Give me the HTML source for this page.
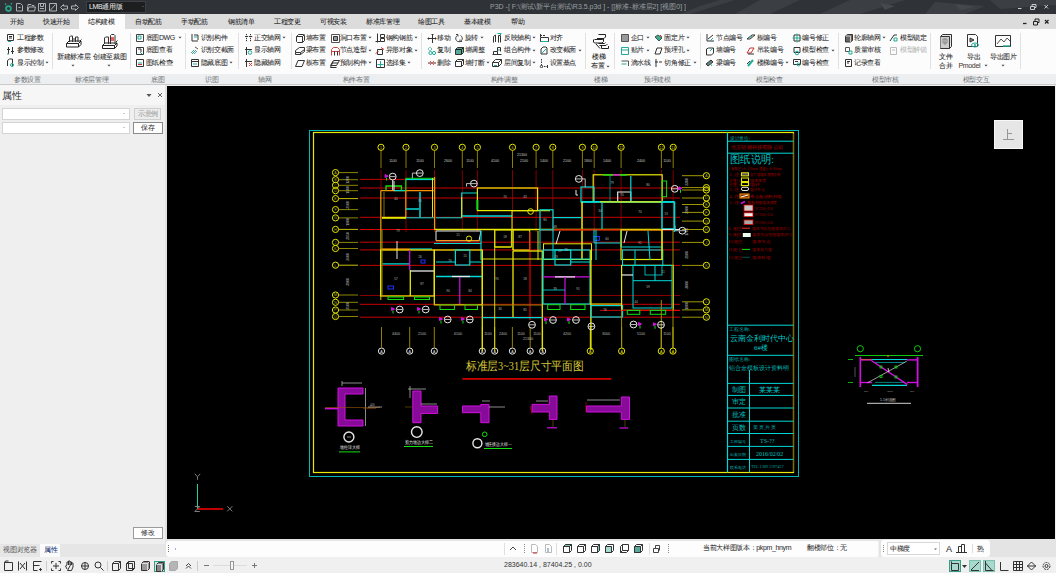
<!DOCTYPE html>
<html><head><meta charset="utf-8">
<style>
*{margin:0;padding:0;box-sizing:border-box}
html,body{width:1056px;height:573px;overflow:hidden;background:#f0f0f0;font-family:"Liberation Sans",sans-serif;position:relative}
.a{position:absolute}
#title{left:0;top:0;width:1056px;height:14px;background:#2f3337}
#tabs{left:0;top:14px;width:1056px;height:15px;background:#dcdcdc}
#rbg{left:0;top:29px;width:1056px;height:45px;background:#fcfcfc}
#glabels{left:0;top:74px;width:1056px;height:10px;background:#eceeef}
#gline{left:0;top:84px;width:1056px;height:1px;background:#c8cacb}
#panel{left:0;top:85px;width:165px;height:459px;background:#efefef}
#canvas{left:167px;top:86px;width:888px;height:453px;background:#000;overflow:hidden}
#cmdarea{left:165px;top:539px;width:891px;height:18px;background:#e4e4e4}
#ptabs{left:0;top:544px;width:165px;height:13px;background:#e6e6e6}
#bottom{left:0;top:557px;width:1056px;height:16px;background:#f0f0f0}
.t{position:absolute;white-space:nowrap;font-size:7px;line-height:8px;color:#222;letter-spacing:-0.35px;-webkit-text-stroke:0.05px currentColor}
</style></head><body>
<div id="title" class="a">
<svg class="a" style="left:0;top:0" width="1056" height="14">
<defs><pattern id="pp" width="60" height="14" patternUnits="userSpaceOnUse"></pattern></defs>
<g fill="#3b3f43">
<polygon points="760,0 800,0 770,14 735,14"/>
<polygon points="850,0 905,0 860,14 820,14"/>
<polygon points="935,2 985,6 965,14 925,14"/>
<polygon points="990,0 1056,0 1056,5 1000,9"/>
<polygon points="700,6 720,0 735,0 690,14 680,14"/>
</g>
<g fill="#45494d"><polygon points="880,3 895,6 885,10"/><polygon points="955,4 975,7 960,10"/></g>
<g fill="none" stroke="#aeb2b5" stroke-width="1">
<circle cx="8.5" cy="8.6" r="2.4" stroke="#29a58a" stroke-width="1.8"/><path d="M5 3.5l1.2 1.2 M12 3.2l-1.2 1.2" stroke="#29a58a" stroke-width="1.3"/>
<path d="M16.5 3.5h4l2 2v5.5h-6z M18.5 7.5h2"/>
<path d="M27.5 6.5v4.5h7l1-4h-6.5l-1.5 4 M28 6.5v-2h3l1 1h2v1"/>
<path d="M38.5 3.5h7v7.5h-7z M40.5 3.5v3h3v-3 M40 8.5h4"/>
<path d="M49.5 3.5h7v7.5h-7z M50.5 10l5-5.5"/>
<path d="M60.5 7.5l3-3v1.5h4v3h-4v1.5z"/>
<path d="M78.5 7.5l-3-3v1.5h-4v3h4v1.5z"/>
</g>
<rect x="86.5" y="1.5" width="59" height="11" fill="#1c1e20" stroke="#3c4043"/>
</svg>
<div class="t" style="left:89px;top:3px;color:#e6e6e6;font-size:7px;line-height:8px">LMB通用版</div>
<div class="t" style="left:142px;top:2px;color:#999;font-size:6px">-</div>
<div class="t" style="left:490px;top:3px;color:#9aa0a4;font-size:7px;line-height:8px;letter-spacing:0;-webkit-text-stroke:0">P3D -[ F:\测试\新平台测试\R3.5.p3d ] - [[标准-标准层2] [视图0] ]</div>
<svg class="a" style="left:1010px;top:0" width="46" height="14" fill="none" stroke="#c8cbcd" stroke-width="1">
<path d="M8 8.5h3.5"/>
<path d="M20.5 6.5h4v3h-4z M22 6.5v-2h4v3h-1.5"/>
<path d="M34.5 5l3.5 3.5M38 5l-3.5 3.5"/>
</svg>
</div>
<div id="tabs" class="a">
<div class="a" style="left:79px;top:0;width:46px;height:15px;background:#fcfcfc"></div>
<div class="t" style="left:10px;top:4px">开始</div>
<div class="t" style="left:43px;top:4px">快速开始</div>
<div class="t" style="left:88px;top:4px">结构建模</div>
<div class="t" style="left:135px;top:4px">自动配筋</div>
<div class="t" style="left:181px;top:4px">手动配筋</div>
<div class="t" style="left:228px;top:4px">钢筋清单</div>
<div class="t" style="left:274px;top:4px">工程变更</div>
<div class="t" style="left:320px;top:4px">可视安装</div>
<div class="t" style="left:366px;top:4px">标准库管理</div>
<div class="t" style="left:418px;top:4px">绘图工具</div>
<div class="t" style="left:464px;top:4px">基本建模</div>
<div class="t" style="left:511px;top:4px">帮助</div>
<svg class="a" style="left:1010px;top:0" width="46" height="15" fill="none" stroke="#222" stroke-width="1">
<path d="M13 9.5h3.5" stroke-width="1.3"/>
<path d="M23.5 7.5h4v3.5h-4z M25 7.5v-2.5h4v3.5h-1.5"/>
<path d="M35 6l3.5 3.5M38.5 6l-3.5 3.5" stroke-width="1.2"/>
</svg>
</div>
<div id="rbg" class="a"></div><div id="glabels" class="a"></div><div id="gline" class="a"></div>
<div id="ribbon" class="a" style="left:0;top:0;width:0;height:0;background:none"></div>
<svg class="a" style="left:6px;top:33px" width="10" height="10" fill="none" stroke-width="1"><path d="M1.5 1.5h6v6h-6z M3 3.5h3 M3 5h3" stroke="#333"/><path d="M2 8.5h3" stroke="#2a9"/></svg>
<div class="t" style="left:17px;top:33.5px;font-size:7px;color:#2a2a2a">工程参数</div>
<svg class="a" style="left:6px;top:46px" width="10" height="10" fill="none" stroke-width="1"><path d="M2.5 1v7 M6.5 1v7 M1 3.5h3 M5 5.5h3" stroke="#333"/><path d="M1 8h2" stroke="#2a9"/></svg>
<div class="t" style="left:17px;top:46.0px;font-size:7px;color:#2a2a2a">参数修改</div>
<svg class="a" style="left:6px;top:58px" width="10" height="10" fill="none" stroke-width="1"><path d="M1.5 8V2.5l2-1.5h3v7" stroke="#333"/><circle cx="6" cy="7" r="1.5" stroke="#2a9"/></svg>
<div class="t" style="left:17px;top:58.7px;font-size:7px;color:#2a2a2a">显示控制</div>
<svg class="a" style="left:45px;top:61.2px" width="4" height="3"><path d="M0.5 0.8h3l-1.5 1.7z" fill="#444"/></svg>
<div class="a" style="left:52px;top:33px;width:1px;height:36px;background:#dfe1e2"></div>
<div class="t" style="left:14px;top:75.8px;font-size:7px;color:#707376;-webkit-text-stroke:0">参数设置</div>
<svg class="a" style="left:0;top:0" width="140" height="60" fill="none" stroke="#222" stroke-width="1">
<path d="M66.5 43.5l2.5-2.5h12l-2.5 2.5z M66.5 43.5v3.5h12v-3.5 M78.5 47l2.5-2.5v-3.5" />
<path d="M69.5 42v-5l1-1h2v6 M75.5 42v-5h2.5v5 M73 39h2" stroke="#333"/>
<path d="M80 41l1.5-1.5" />
<path d="M102.5 45.5l2.5-2.5h12l-2.5 2.5z M102.5 45.5v3h12v-3 M114.5 48.5l2.5-2.5v-3" />
<path d="M104.5 44v-6l1-1h3v7 M110.5 44v-8.5l1-1h2.5l1 1v8.5" stroke="#333"/>
<rect x="111" y="37" width="3" height="4" fill="#f06060" stroke="none"/>
<path d="M116 42l1.5-1.5"/>
</svg>
<div class="t" style="left:57px;top:52.7px;font-size:7px;color:#1a1a1a">新建标准层</div>
<div class="t" style="left:93px;top:52.7px;font-size:7px;color:#1a1a1a">创建至裁图</div>
<svg class="a" style="left:71px;top:63.5px" width="4" height="3"><path d="M0.5 0.8h3l-1.5 1.7z" fill="#444"/></svg>
<svg class="a" style="left:107px;top:63.5px" width="4" height="3"><path d="M0.5 0.8h3l-1.5 1.7z" fill="#444"/></svg>
<div class="a" style="left:130px;top:33px;width:1px;height:36px;background:#dfe1e2"></div>
<div class="t" style="left:75px;top:75.8px;font-size:7px;color:#707376;-webkit-text-stroke:0">标准层管理</div>
<svg class="a" style="left:135px;top:33px" width="10" height="10" fill="none" stroke-width="1"><path d="M1.5 1.5h7v7h-7z" stroke="#444"/><path d="M3 3h3v3h-3z" stroke="#2a9"/></svg>
<div class="t" style="left:145.6px;top:33.5px;font-size:7px;color:#2a2a2a">底图DWG</div>
<svg class="a" style="left:178px;top:36.0px" width="4" height="3"><path d="M0.5 0.8h3l-1.5 1.7z" fill="#444"/></svg>
<svg class="a" style="left:135px;top:46px" width="10" height="10" fill="none" stroke-width="1"><path d="M1.5 1.5h7v7h-7z" stroke="#333"/><path d="M3 3h3v3" stroke="#333"/><path d="M5 6l2 2" stroke="#2a9"/></svg>
<div class="t" style="left:145.6px;top:46.0px;font-size:7px;color:#2a2a2a">底图查看</div>
<svg class="a" style="left:135px;top:58px" width="10" height="10" fill="none" stroke-width="1"><path d="M1.5 1.5h7v7h-7z" stroke="#333"/><path d="M3 5h4" stroke="#2a9"/><path d="M3 6.5h4" stroke="#c33"/></svg>
<div class="t" style="left:145.6px;top:58.7px;font-size:7px;color:#2a2a2a">图纸检查</div>
<svg class="a" style="left:170px;top:61.2px" width="4" height="3"><path d="M0.5 0.8h3l-1.5 1.7z" fill="#444"/></svg>
<div class="a" style="left:185px;top:33px;width:1px;height:36px;background:#dfe1e2"></div>
<div class="t" style="left:151px;top:75.8px;font-size:7px;color:#707376;-webkit-text-stroke:0">底图</div>
<svg class="a" style="left:190px;top:33px" width="10" height="10" fill="none" stroke-width="1"><path d="M2 1v7h6 M4 2h4v5" stroke="#333"/><path d="M4 4h3" stroke="#2a9"/></svg>
<div class="t" style="left:200.6px;top:33.5px;font-size:7px;color:#2a2a2a">识别构件</div>
<svg class="a" style="left:190px;top:46px" width="10" height="10" fill="none" stroke-width="1"><path d="M1 7l3-3 M2 8l4-4 M4 8l3-3" stroke="#4a9"/><path d="M5 1l3 2" stroke="#555"/></svg>
<div class="t" style="left:200.6px;top:46.0px;font-size:7px;color:#2a2a2a">识别交截面</div>
<svg class="a" style="left:190px;top:58px" width="10" height="10" fill="none" stroke-width="1"><path d="M1.5 1.5h7v7h-7z M1.5 3.5h7" stroke="#333"/><path d="M3 6h4" stroke="#2a9"/></svg>
<div class="t" style="left:200.6px;top:58.7px;font-size:7px;color:#2a2a2a">隐藏底图</div>
<svg class="a" style="left:229px;top:61.2px" width="4" height="3"><path d="M0.5 0.8h3l-1.5 1.7z" fill="#444"/></svg>
<div class="a" style="left:238px;top:33px;width:1px;height:36px;background:#dfe1e2"></div>
<div class="t" style="left:205px;top:75.8px;font-size:7px;color:#707376;-webkit-text-stroke:0">识图</div>
<svg class="a" style="left:244px;top:33px" width="10" height="10" fill="none" stroke-width="1"><path d="M2.5 1v8 M6.5 1v8 M1 3.5h8" stroke="#333" stroke-dasharray="1.2 0.8"/></svg>
<div class="t" style="left:254px;top:33.5px;font-size:7px;color:#2a2a2a">正交轴网</div>
<svg class="a" style="left:282px;top:36.0px" width="4" height="3"><path d="M0.5 0.8h3l-1.5 1.7z" fill="#444"/></svg>
<svg class="a" style="left:244px;top:46px" width="10" height="10" fill="none" stroke-width="1"><path d="M2.5 1v8 M1 3.5h7" stroke="#333"/><circle cx="6" cy="6.5" r="1.8" stroke="#2a9"/></svg>
<div class="t" style="left:254px;top:46.0px;font-size:7px;color:#2a2a2a">显示轴网</div>
<svg class="a" style="left:244px;top:58px" width="10" height="10" fill="none" stroke-width="1"><path d="M2.5 1v8 M1 3.5h7" stroke="#333"/><path d="M5 5l3 3M8 5l-3 3" stroke="#e33"/></svg>
<div class="t" style="left:254px;top:58.7px;font-size:7px;color:#2a2a2a">隐藏轴网</div>
<div class="a" style="left:291px;top:33px;width:1px;height:36px;background:#dfe1e2"></div>
<div class="t" style="left:258px;top:75.8px;font-size:7px;color:#707376;-webkit-text-stroke:0">轴网</div>
<svg class="a" style="left:295px;top:33px" width="10" height="10" fill="none" stroke-width="1"><path d="M1.5 3.5l2-2h5l1 1v5l-2 2h-5l-1-1z M1.5 3.5h6v6 M7.5 3.5l2-2" stroke="#333"/></svg>
<div class="t" style="left:305.6px;top:33.5px;font-size:7px;color:#2a2a2a">墙布置</div>
<svg class="a" style="left:295px;top:46px" width="10" height="10" fill="none" stroke-width="1"><path d="M0.5 4.5l4-3h5v2l-4 3h-5z M0.5 6.5v2h5v-2 M5.5 8.5l4-3v-2" stroke="#333"/></svg>
<div class="t" style="left:305.6px;top:46.0px;font-size:7px;color:#2a2a2a">梁布置</div>
<svg class="a" style="left:295px;top:58px" width="10" height="10" fill="none" stroke-width="1"><path d="M0.5 8.5l2.5-6h6.5l-2.5 6z" stroke="#333"/></svg>
<div class="t" style="left:305.6px;top:58.7px;font-size:7px;color:#2a2a2a">板布置</div>
<svg class="a" style="left:330px;top:33px" width="10" height="10" fill="none" stroke-width="1"><path d="M1.5 1.5h8v8h-8z" stroke="#555"/><path d="M3.5 3.5h4v4h-4z" stroke="#333" fill="#999"/></svg>
<div class="t" style="left:339.8px;top:33.5px;font-size:7px;color:#2a2a2a">洞口布置</div>
<svg class="a" style="left:368px;top:36.0px" width="4" height="3"><path d="M0.5 0.8h3l-1.5 1.7z" fill="#444"/></svg>
<svg class="a" style="left:330px;top:46px" width="10" height="10" fill="none" stroke-width="1"><path d="M1.5 9.5v-6l2-2h4l2 2v6 M1.5 5.5h8" stroke="#c44"/><path d="M4.5 9.5v-4 M7.5 9.5v-4" stroke="#333"/></svg>
<div class="t" style="left:339.8px;top:46.0px;font-size:7px;color:#2a2a2a">节点造型</div>
<svg class="a" style="left:368px;top:48.5px" width="4" height="3"><path d="M0.5 0.8h3l-1.5 1.7z" fill="#444"/></svg>
<svg class="a" style="left:330px;top:58px" width="10" height="10" fill="none" stroke-width="1"><path d="M0.5 7.5l3-5h6l-3 5z M2 5h6 M3 3.5l-2.5 6h6" stroke="#333"/></svg>
<div class="t" style="left:339.8px;top:58.7px;font-size:7px;color:#2a2a2a">预制构件</div>
<svg class="a" style="left:368px;top:61.2px" width="4" height="3"><path d="M0.5 0.8h3l-1.5 1.7z" fill="#444"/></svg>
<svg class="a" style="left:375px;top:33px" width="10" height="10" fill="none" stroke-width="1"><path d="M2.5 0.5v9 M0.5 8.5h5 M5.5 1.5h4v3h-4z M5.5 5.5h4v3h-4z" stroke="#333"/></svg>
<div class="t" style="left:385.7px;top:33.5px;font-size:7px;color:#2a2a2a">钢构钢筋</div>
<svg class="a" style="left:414px;top:36.0px" width="4" height="3"><path d="M0.5 0.8h3l-1.5 1.7z" fill="#444"/></svg>
<svg class="a" style="left:375px;top:46px" width="10" height="10" fill="none" stroke-width="1"><path d="M2.5 3.5h5v5h-5z" stroke="#333"/><path d="M0.5 7.5l3-2 M6 1.5l3 2" stroke="#c33"/></svg>
<div class="t" style="left:385.7px;top:46.0px;font-size:7px;color:#2a2a2a">异形对象</div>
<svg class="a" style="left:414px;top:48.5px" width="4" height="3"><path d="M0.5 0.8h3l-1.5 1.7z" fill="#444"/></svg>
<svg class="a" style="left:375px;top:58px" width="10" height="10" fill="none" stroke-width="1"><path d="M1.5 1.5h8v8h-8z" stroke="#333"/><path d="M5.5 3v6 M2.5 6.5h6" stroke="#2a9"/></svg>
<div class="t" style="left:385.7px;top:58.7px;font-size:7px;color:#2a2a2a">选择集</div>
<svg class="a" style="left:407px;top:61.2px" width="4" height="3"><path d="M0.5 0.8h3l-1.5 1.7z" fill="#444"/></svg>
<div class="a" style="left:421px;top:33px;width:1px;height:36px;background:#dfe1e2"></div>
<div class="t" style="left:342.6px;top:75.8px;font-size:7px;color:#707376;-webkit-text-stroke:0">构件布置</div>
<svg class="a" style="left:427px;top:33px" width="10" height="10" fill="none" stroke-width="1"><path d="M0.5 5.5h9 M5.5 1v9 M1.5 4.5v2 M8.5 4.5v2 M4.5 1.5h2" stroke="#333"/></svg>
<div class="t" style="left:437px;top:33.5px;font-size:7px;color:#2a2a2a">移动</div>
<svg class="a" style="left:427px;top:46px" width="10" height="10" fill="none" stroke-width="1"><circle cx="3" cy="3" r="1.6" stroke="#2a9" stroke-dasharray="1 .6"/><circle cx="3.5" cy="7" r="1.6" stroke="#2a9"/><circle cx="7" cy="7" r="1.6" stroke="#2a9"/></svg>
<div class="t" style="left:437px;top:46.0px;font-size:7px;color:#2a2a2a">复制</div>
<svg class="a" style="left:427px;top:58px" width="10" height="10" fill="none" stroke-width="1"><path d="M1 5h8" stroke="#333"/><path d="M3 3l4 4M7 3l-4 4" stroke="#e55"/></svg>
<div class="t" style="left:437px;top:58.7px;font-size:7px;color:#2a2a2a">删除</div>
<svg class="a" style="left:454px;top:33px" width="10" height="10" fill="none" stroke-width="1"><path d="M3.5 2.5a3.3 3.3 0 1 0 3 0" stroke="#444"/><path d="M2 1.5h2v2 M8 8.5h-2v-2" stroke="#444"/></svg>
<div class="t" style="left:464.8px;top:33.5px;font-size:7px;color:#2a2a2a">旋转</div>
<svg class="a" style="left:480px;top:36.0px" width="4" height="3"><path d="M0.5 0.8h3l-1.5 1.7z" fill="#444"/></svg>
<svg class="a" style="left:454px;top:46px" width="10" height="10" fill="none" stroke-width="1"><path d="M1.5 3.5l2-2h6v5l-2 2h-6z" stroke="#333" fill="#5aa898"/><path d="M1.5 3.5h6v5 M7.5 3.5l2-2" stroke="#222"/></svg>
<div class="t" style="left:464.8px;top:46.0px;font-size:7px;color:#2a2a2a">墙调整</div>
<svg class="a" style="left:454px;top:58px" width="10" height="10" fill="none" stroke-width="1"><path d="M1.5 3.5l2-2h6v5l-2 2h-6z M1.5 3.5h6v5 M7.5 3.5l2-2" stroke="#333"/></svg>
<div class="t" style="left:464.8px;top:58.7px;font-size:7px;color:#2a2a2a">墙打断</div>
<svg class="a" style="left:486px;top:61.2px" width="4" height="3"><path d="M0.5 0.8h3l-1.5 1.7z" fill="#444"/></svg>
<svg class="a" style="left:492px;top:33px" width="10" height="10" fill="none" stroke-width="1"><path d="M1.5 9.5v-6l2-1.5v7 M6.5 9.5v-7h2v7" stroke="#333"/><path d="M5.5 0.5h4 M8.5 0.5v2" stroke="#2a9"/></svg>
<div class="t" style="left:503.9px;top:33.5px;font-size:7px;color:#2a2a2a">反映轴构</div>
<svg class="a" style="left:532px;top:36.0px" width="4" height="3"><path d="M0.5 0.8h3l-1.5 1.7z" fill="#444"/></svg>
<svg class="a" style="left:492px;top:46px" width="10" height="10" fill="none" stroke-width="1"><path d="M0.5 8.5h9 M1.5 8.5v-3h4v3" stroke="#333"/><path d="M5.5 5.5v-4h3v4" stroke="#333"/><path d="M6 4h2" stroke="#2a9"/></svg>
<div class="t" style="left:503.9px;top:46.0px;font-size:7px;color:#2a2a2a">组合构件</div>
<svg class="a" style="left:532px;top:48.5px" width="4" height="3"><path d="M0.5 0.8h3l-1.5 1.7z" fill="#444"/></svg>
<svg class="a" style="left:492px;top:58px" width="10" height="10" fill="none" stroke-width="1"><path d="M0.5 4.5l3-3h6v4l-3 3h-6z M0.5 4.5h6v4 M6.5 4.5l3-3" stroke="#333"/><path d="M2 7.5h3" stroke="#2a9"/></svg>
<div class="t" style="left:503.9px;top:58.7px;font-size:7px;color:#2a2a2a">层间复制</div>
<svg class="a" style="left:532px;top:61.2px" width="4" height="3"><path d="M0.5 0.8h3l-1.5 1.7z" fill="#444"/></svg>
<svg class="a" style="left:539px;top:33px" width="10" height="10" fill="none" stroke-width="1"><path d="M1.5 4.5h8v4h-8z" stroke="#333"/><path d="M1 2.5h2 M4 2.5h2 M1.5 1v3" stroke="#333"/><path d="M2 8.5h7" stroke="#2a9"/></svg>
<div class="t" style="left:549.5px;top:33.5px;font-size:7px;color:#2a2a2a">对齐</div>
<svg class="a" style="left:539px;top:46px" width="10" height="10" fill="none" stroke-width="1"><path d="M2 8V3l2-2h3l1 1v6z" stroke="#333"/><path d="M3 7l4-4" stroke="#2a9"/></svg>
<div class="t" style="left:549.5px;top:46.0px;font-size:7px;color:#2a2a2a">改变截面</div>
<svg class="a" style="left:578px;top:48.5px" width="4" height="3"><path d="M0.5 0.8h3l-1.5 1.7z" fill="#444"/></svg>
<svg class="a" style="left:539px;top:58px" width="10" height="10" fill="none" stroke-width="1"><path d="M2.5 1v7.5h6" stroke="#333" stroke-dasharray="1.5 1"/><circle cx="2.5" cy="8.5" r="1.2" fill="#fff" stroke="#333"/><path d="M8.5 7v3" stroke="#333"/></svg>
<div class="t" style="left:549.5px;top:58.7px;font-size:7px;color:#2a2a2a">设置基点</div>
<div class="a" style="left:585px;top:33px;width:1px;height:36px;background:#dfe1e2"></div>
<div class="t" style="left:490.8px;top:75.8px;font-size:7px;color:#707376;-webkit-text-stroke:0">构件调整</div>
<svg class="a" style="left:0;top:0" width="620" height="60" fill="none" stroke="#222" stroke-width="1">
<path d="M598.5 34.5h7v2.5l-1.5 1.5h-7 M596.5 37.5v0 M594.5 39.5h8l1.5-1.5 M593.5 39.5v2.5l1 1h7.5l1.5-1.5v-2.5 M598.5 43.5h6l1-1 M599.5 45.5h6.5l1.5-1.5 M601.5 46v2.5h7v-2.5 M596 44l4 4.5"/>
</svg>
<div class="t" style="left:592px;top:53.3px;font-size:7px;color:#1a1a1a">楼梯</div>
<div class="t" style="left:591px;top:62.3px;font-size:7px;color:#1a1a1a">布置</div>
<svg class="a" style="left:606px;top:64.8px" width="4" height="3"><path d="M0.5 0.8h3l-1.5 1.7z" fill="#444"/></svg>
<div class="a" style="left:614px;top:33px;width:1px;height:36px;background:#dfe1e2"></div>
<div class="t" style="left:594px;top:75.8px;font-size:7px;color:#707376;-webkit-text-stroke:0">楼梯</div>
<svg class="a" style="left:620px;top:33px" width="10" height="10" fill="none" stroke-width="1"><path d="M1.5 1.5h7v7h-7z" stroke="#555" fill="#999"/></svg>
<div class="t" style="left:630.5px;top:33.5px;font-size:7px;color:#2a2a2a">企口</div>
<svg class="a" style="left:645.5px;top:36.0px" width="4" height="3"><path d="M0.5 0.8h3l-1.5 1.7z" fill="#444"/></svg>
<svg class="a" style="left:620px;top:46px" width="10" height="10" fill="none" stroke-width="1"><path d="M1.5 1.5h7v7h-7z M1.5 4h7" stroke="#2a9"/></svg>
<div class="t" style="left:630.5px;top:46.0px;font-size:7px;color:#2a2a2a">贴片</div>
<svg class="a" style="left:645.5px;top:48.5px" width="4" height="3"><path d="M0.5 0.8h3l-1.5 1.7z" fill="#444"/></svg>
<svg class="a" style="left:620px;top:58px" width="10" height="10" fill="none" stroke-width="1"><path d="M1.5 3h7v5" stroke="#555"/><path d="M1.5 6h5" stroke="#2a9"/></svg>
<div class="t" style="left:630.5px;top:58.7px;font-size:7px;color:#2a2a2a">滴水线</div>
<svg class="a" style="left:654px;top:33px" width="10" height="10" fill="none" stroke-width="1"><path d="M1 4l3-2 4 3-3 3z" stroke="#355" fill="#4a8"/><path d="M6 2l2 2" stroke="#c33"/></svg>
<div class="t" style="left:664.4px;top:33.5px;font-size:7px;color:#2a2a2a">固定片</div>
<svg class="a" style="left:686px;top:36.0px" width="4" height="3"><path d="M0.5 0.8h3l-1.5 1.7z" fill="#444"/></svg>
<svg class="a" style="left:654px;top:46px" width="10" height="10" fill="none" stroke-width="1"><path d="M1 8l2-6h5l-2 6z" stroke="#333"/></svg>
<div class="t" style="left:664.4px;top:46.0px;font-size:7px;color:#2a2a2a">预埋孔</div>
<svg class="a" style="left:686px;top:48.5px" width="4" height="3"><path d="M0.5 0.8h3l-1.5 1.7z" fill="#444"/></svg>
<svg class="a" style="left:654px;top:58px" width="10" height="10" fill="none" stroke-width="1"><path d="M2 1v8 M1 4h3 M5 4h3" stroke="#333"/></svg>
<div class="t" style="left:664.4px;top:58.7px;font-size:7px;color:#2a2a2a">切角修正</div>
<svg class="a" style="left:693px;top:61.2px" width="4" height="3"><path d="M0.5 0.8h3l-1.5 1.7z" fill="#444"/></svg>
<div class="a" style="left:700px;top:33px;width:1px;height:36px;background:#dfe1e2"></div>
<div class="t" style="left:644px;top:75.8px;font-size:7px;color:#707376;-webkit-text-stroke:0">预埋建模</div>
<svg class="a" style="left:705px;top:33px" width="10" height="10" fill="none" stroke-width="1"><path d="M2 1v7h7 M3 6l5-4" stroke="#333"/><path d="M5 8l3-3" stroke="#2a9"/></svg>
<div class="t" style="left:716px;top:33.5px;font-size:7px;color:#2a2a2a">节点编号</div>
<svg class="a" style="left:705px;top:46px" width="10" height="10" fill="none" stroke-width="1"><path d="M1.5 3l2-1h5v5l-2 2h-5z" stroke="#333"/><path d="M5 5l3-3" stroke="#2a9"/></svg>
<div class="t" style="left:716px;top:46.0px;font-size:7px;color:#2a2a2a">墙编号</div>
<svg class="a" style="left:705px;top:58px" width="10" height="10" fill="none" stroke-width="1"><path d="M1 6l5-4 2 2-5 4z" stroke="#333" fill="#777"/><path d="M4 4l3 4" stroke="#2a9"/></svg>
<div class="t" style="left:716px;top:58.7px;font-size:7px;color:#2a2a2a">梁编号</div>
<svg class="a" style="left:746px;top:33px" width="10" height="10" fill="none" stroke-width="1"><path d="M1 6l5-4h3l-5 4z" stroke="#333"/><path d="M3 5l3-2" stroke="#2a9"/></svg>
<div class="t" style="left:756.7px;top:33.5px;font-size:7px;color:#2a2a2a">板编号</div>
<svg class="a" style="left:746px;top:46px" width="10" height="10" fill="none" stroke-width="1"><path d="M1 7l3-5h4l-3 5z" stroke="#c33"/><path d="M2 8h6" stroke="#333"/></svg>
<div class="t" style="left:756.7px;top:46.0px;font-size:7px;color:#2a2a2a">吊装编号</div>
<svg class="a" style="left:746px;top:58px" width="10" height="10" fill="none" stroke-width="1"><path d="M2 8l5-6" stroke="#2a9" stroke-width="2"/><path d="M1 6l3-3" stroke="#333"/></svg>
<div class="t" style="left:756.7px;top:58.7px;font-size:7px;color:#2a2a2a">楼梯编号</div>
<svg class="a" style="left:785px;top:61.2px" width="4" height="3"><path d="M0.5 0.8h3l-1.5 1.7z" fill="#444"/></svg>
<svg class="a" style="left:792px;top:33px" width="10" height="10" fill="none" stroke-width="1"><path d="M2 2h6v6h-6z" stroke="#333"/><path d="M5 0.5v9 M0.5 5h9" stroke="#2a9"/></svg>
<div class="t" style="left:802.3px;top:33.5px;font-size:7px;color:#2a2a2a">编号修正</div>
<svg class="a" style="left:792px;top:46px" width="10" height="10" fill="none" stroke-width="1"><path d="M2 1.5h6v5h-6z" stroke="#333"/><circle cx="5" cy="7" r="1.8" stroke="#2a9"/></svg>
<div class="t" style="left:802.3px;top:46.0px;font-size:7px;color:#2a2a2a">模型检查</div>
<svg class="a" style="left:831px;top:48.5px" width="4" height="3"><path d="M0.5 0.8h3l-1.5 1.7z" fill="#444"/></svg>
<svg class="a" style="left:792px;top:58px" width="10" height="10" fill="none" stroke-width="1"><path d="M1.5 1.5h7v5h-7z M3 3.5h3" stroke="#333"/><circle cx="6.5" cy="6.5" r="1.5" stroke="#2a9"/></svg>
<div class="t" style="left:802.3px;top:58.7px;font-size:7px;color:#2a2a2a">编号检查</div>
<div class="a" style="left:838px;top:33px;width:1px;height:36px;background:#dfe1e2"></div>
<div class="t" style="left:756px;top:75.8px;font-size:7px;color:#707376;-webkit-text-stroke:0">模型检查</div>
<svg class="a" style="left:844px;top:33px" width="10" height="10" fill="none" stroke-width="1"><path d="M1.5 3l2-1.5h5v6l-2 1.5h-5z" stroke="#333" fill="#666"/><path d="M1.5 3h5v6" stroke="#ccc"/></svg>
<div class="t" style="left:854px;top:33.5px;font-size:7px;color:#2a2a2a">轮廓轴网</div>
<svg class="a" style="left:882.4px;top:36.0px" width="4" height="3"><path d="M0.5 0.8h3l-1.5 1.7z" fill="#444"/></svg>
<svg class="a" style="left:844px;top:46px" width="10" height="10" fill="none" stroke-width="1"><path d="M1.5 1.5h4v4h-4z" stroke="#555"/><path d="M5 5h3v3h-3z" stroke="#2a9"/></svg>
<div class="t" style="left:854px;top:46.0px;font-size:7px;color:#2a2a2a">质量审核</div>
<svg class="a" style="left:844px;top:58px" width="10" height="10" fill="none" stroke-width="1"><path d="M1.5 1.5h6v7h-6z M3 3.5h3 M3 5h2" stroke="#333"/></svg>
<div class="t" style="left:854px;top:58.7px;font-size:7px;color:#2a2a2a">记录查看</div>
<svg class="a" style="left:889px;top:33px" width="10" height="10" fill="none" stroke-width="1"><path d="M1 8l4-6h3" stroke="#333"/><path d="M5 5h3v3h-3z" stroke="#2a9"/></svg>
<div class="t" style="left:900px;top:33.5px;font-size:7px;color:#2a2a2a">模型锁定</div>
<svg class="a" style="left:889px;top:46px" width="10" height="10" fill="none" stroke-width="1"><path d="M1.5 1.5h6v7h-6z M3 4h3" stroke="#bbb"/></svg>
<div class="t" style="left:900px;top:46.0px;font-size:7px;color:#b8b8b8">模型解锁</div>
<div class="a" style="left:930px;top:33px;width:1px;height:36px;background:#dfe1e2"></div>
<div class="t" style="left:872px;top:75.8px;font-size:7px;color:#707376;-webkit-text-stroke:0">模型审核</div>
<svg class="a" style="left:938px;top:33px" width="17" height="18" fill="none" stroke="#333" stroke-width="1">
<path d="M2.5 3.5l2-2h9v12l-2 2h-9z" fill="#e8e8e8"/><path d="M2.5 15.5h9v-12h-9" fill="#ccc"/><path d="M5 6h4v4h-4z M7 5v7" stroke="#888"/></svg>
<div class="t" style="left:939px;top:53.3px;font-size:7px;color:#1a1a1a">文件</div>
<div class="t" style="left:939px;top:62.3px;font-size:7px;color:#1a1a1a">合并</div>
<svg class="a" style="left:964px;top:33px" width="17" height="18" fill="none" stroke="#333" stroke-width="1">
<path d="M3.5 1.5h8l2 2v10h-10z"/><path d="M6 5l4 2-4 2z" fill="#888"/><ellipse cx="11" cy="12" rx="3.5" ry="2" stroke="#2a9"/><circle cx="11" cy="12" r="1" fill="#2a9" stroke="none"/></svg>
<div class="t" style="left:967px;top:53.3px;font-size:7px;color:#1a1a1a">导出</div>
<div class="t" style="left:958.5px;top:62.3px;font-size:7px;color:#4a3a3a">Pmodel</div>
<svg class="a" style="left:984px;top:63.5px" width="4" height="3"><path d="M0.5 0.8h3l-1.5 1.7z" fill="#444"/></svg>
<svg class="a" style="left:994px;top:34px" width="18" height="15" fill="none" stroke="#333" stroke-width="1">
<path d="M1.5 1.5h15v11h-15z"/><path d="M3 10l4-5 3 3 3-4 3 3" stroke="#555"/><path d="M9 12h7" stroke="#2a9" stroke-width="1.4"/></svg>
<div class="t" style="left:990px;top:53.3px;font-size:7px;color:#1a1a1a">导出图片</div>
<svg class="a" style="left:1001px;top:63.5px" width="4" height="3"><path d="M0.5 0.8h3l-1.5 1.7z" fill="#444"/></svg>
<div class="a" style="left:1020px;top:33px;width:1px;height:36px;background:#dfe1e2"></div>
<div class="t" style="left:962.6px;top:75.8px;font-size:7px;color:#707376;-webkit-text-stroke:0">模型交互</div>
<div id="panel" class="a">
<div class="a" style="left:0;top:0;width:165px;height:20px;background:#f6f6f6"></div>
<div class="t" style="left:2px;top:5px;font-size:10px;line-height:11px;color:#333;letter-spacing:-0.3px;-webkit-text-stroke:0">属性</div>
<svg class="a" style="left:144px;top:6px" width="20" height="9"><path d="M2.5 3h5l-2.5 3z" fill="#555"/><path d="M14 2l4 4M18 2l-4 4" stroke="#666" stroke-width="1"/></svg>
<div class="a" style="left:2px;top:23px;width:128px;height:12px;background:#fff;border:1px solid #d4d4d4"></div>
<div class="t" style="left:123px;top:24px;color:#555;font-size:6px">-</div>
<div class="a" style="left:134px;top:23px;width:27px;height:12px;background:#ececec;border:1px solid #cfcfcf"></div>
<div class="t" style="left:138px;top:25px;color:#9a9a9a">示意例</div>
<div class="a" style="left:2px;top:37px;width:128px;height:12px;background:#fff;border:1px solid #d4d4d4"></div>
<div class="t" style="left:123px;top:38px;color:#555;font-size:6px">-</div>
<div class="a" style="left:133px;top:37px;width:30px;height:12px;background:#fff;border:1px solid #8a8a8a"></div>
<div class="t" style="left:141px;top:39px;color:#222;-webkit-text-stroke:0">保存</div>
<div class="a" style="left:133px;top:442px;width:30px;height:12px;background:#fff;border:1px solid #9a9a9a"></div>
<div class="t" style="left:141px;top:444px;color:#333;-webkit-text-stroke:0">修改</div>
<div class="a" style="left:165px;top:0;width:2px;height:459px;background:#e2e2e2"></div>
</div>

<div id="canvas" class="a"><svg class="a" style="left:-167px;top:-86px" width="1056" height="573" font-family="Liberation Serif"><rect x="309.5" y="130.5" width="489.0" height="346.0" stroke="#00b8b8" stroke-width="1" fill="none"/>
<rect x="313.5" y="132.5" width="480.0" height="340.0" stroke="#e8e800" stroke-width="1.2" fill="none"/>
<line x1="793.5" y1="133.5" x2="793.5" y2="471.8" stroke="#7a6a00" stroke-width="1.2"/>
<line x1="727.5" y1="132.5" x2="727.5" y2="472.5" stroke="#00d8d8" stroke-width="1.2"/>
<line x1="727.5" y1="141.2" x2="793.5" y2="141.2" stroke="#00d8d8" stroke-width="1"/>
<line x1="727.5" y1="153.2" x2="793.5" y2="153.2" stroke="#00d8d8" stroke-width="1"/>
<line x1="727.5" y1="325.2" x2="793.5" y2="325.2" stroke="#00d8d8" stroke-width="1"/>
<line x1="727.5" y1="355.3" x2="793.5" y2="355.3" stroke="#00d8d8" stroke-width="1"/>
<line x1="727.5" y1="383.4" x2="793.5" y2="383.4" stroke="#00d8d8" stroke-width="1"/>
<line x1="727.5" y1="395.4" x2="793.5" y2="395.4" stroke="#00d8d8" stroke-width="1"/>
<line x1="727.5" y1="408" x2="793.5" y2="408" stroke="#00d8d8" stroke-width="1"/>
<line x1="727.5" y1="421.2" x2="793.5" y2="421.2" stroke="#00d8d8" stroke-width="1"/>
<line x1="727.5" y1="433.5" x2="793.5" y2="433.5" stroke="#00d8d8" stroke-width="1"/>
<line x1="727.5" y1="446.4" x2="793.5" y2="446.4" stroke="#00d8d8" stroke-width="1"/>
<line x1="727.5" y1="459.4" x2="793.5" y2="459.4" stroke="#00d8d8" stroke-width="1"/>
<line x1="749.5" y1="370" x2="749.5" y2="472.5" stroke="#00d8d8" stroke-width="1"/>
<text x="730" y="139.5" fill="#00a8a8" font-size="5" font-family="Liberation Serif" text-anchor="start" textLength="20" lengthAdjust="spacingAndGlyphs">设计单位:</text>
<text x="731" y="149" fill="#b00000" font-size="5" font-family="Liberation Serif" text-anchor="start" textLength="52" lengthAdjust="spacingAndGlyphs">北京铝模科技有限公司</text>
<text x="730" y="162.5" fill="#00c0c0" font-size="10.5" font-family="Liberation Serif" text-anchor="start" textLength="44" lengthAdjust="spacingAndGlyphs">图纸说明:</text>
<text x="728" y="169.5" fill="#a00000" font-size="4.2" font-family="Liberation Serif" text-anchor="start" textLength="54" lengthAdjust="spacingAndGlyphs">1.板厚(主):h=120mm  混凝土:h=80mm</text>
<text x="729" y="176.3" fill="#a00000" font-size="4.2" font-family="Liberation Serif" text-anchor="start" textLength="12" lengthAdjust="spacingAndGlyphs">2.   注:</text>
<text x="750" y="176.3" fill="#a00000" font-size="4.2" font-family="Liberation Serif" text-anchor="start" textLength="30" lengthAdjust="spacingAndGlyphs">剪力墙墙体厚度结构</text>
<text x="729" y="181.5" fill="#a00000" font-size="4.2" font-family="Liberation Serif" text-anchor="start" textLength="12" lengthAdjust="spacingAndGlyphs">   注:</text>
<text x="750" y="181.5" fill="#a00000" font-size="4.2" font-family="Liberation Serif" text-anchor="start" textLength="16" lengthAdjust="spacingAndGlyphs">墙体厚度</text>
<text x="729" y="186" fill="#a00000" font-size="4.2" font-family="Liberation Serif" text-anchor="start" textLength="12" lengthAdjust="spacingAndGlyphs">   注:</text>
<text x="750" y="186" fill="#a00000" font-size="4.2" font-family="Liberation Serif" text-anchor="start" textLength="10" lengthAdjust="spacingAndGlyphs">墙柱</text>
<text x="729" y="191" fill="#a00000" font-size="4.2" font-family="Liberation Serif" text-anchor="start" textLength="12" lengthAdjust="spacingAndGlyphs">3.   注:</text>
<text x="750" y="191" fill="#a00000" font-size="4.2" font-family="Liberation Serif" text-anchor="start" textLength="14" lengthAdjust="spacingAndGlyphs">墙柱节点</text>
<text x="729" y="197.5" fill="#a00000" font-size="4.2" font-family="Liberation Serif" text-anchor="start" textLength="12" lengthAdjust="spacingAndGlyphs">4.   注:</text>
<text x="750" y="197.5" fill="#a00000" font-size="4.2" font-family="Liberation Serif" text-anchor="start" textLength="32" lengthAdjust="spacingAndGlyphs">叠合板结构外墙</text>
<text x="729" y="203.5" fill="#a00000" font-size="4.2" font-family="Liberation Serif" text-anchor="start" textLength="12" lengthAdjust="spacingAndGlyphs">5.   注:</text>
<text x="747" y="203.5" fill="#a00000" font-size="4.2" font-family="Liberation Serif" text-anchor="start" textLength="30" lengthAdjust="spacingAndGlyphs">预制外墙墙体厚度</text>
<text x="755" y="209.5" fill="#a00000" font-size="4.2" font-family="Liberation Serif" text-anchor="start" textLength="18" lengthAdjust="spacingAndGlyphs">PC200×150</text>
<text x="755" y="216" fill="#a00000" font-size="4.2" font-family="Liberation Serif" text-anchor="start" textLength="18" lengthAdjust="spacingAndGlyphs">PC200×150</text>
<text x="755" y="223.5" fill="#a00000" font-size="4.2" font-family="Liberation Serif" text-anchor="start" textLength="18" lengthAdjust="spacingAndGlyphs">PC200×150</text>
<text x="728" y="229.5" fill="#a00000" font-size="4.2" font-family="Liberation Serif" text-anchor="start" textLength="14" lengthAdjust="spacingAndGlyphs">8.  图注</text>
<text x="728" y="236" fill="#a00000" font-size="4.2" font-family="Liberation Serif" text-anchor="start" textLength="14" lengthAdjust="spacingAndGlyphs">9.  图注</text>
<text x="728" y="243" fill="#a00000" font-size="4.2" font-family="Liberation Serif" text-anchor="start" textLength="14" lengthAdjust="spacingAndGlyphs">10.图注</text>
<text x="728" y="250.5" fill="#a00000" font-size="4.2" font-family="Liberation Serif" text-anchor="start" textLength="14" lengthAdjust="spacingAndGlyphs">11.图注</text>
<text x="728" y="258.5" fill="#a00000" font-size="4.2" font-family="Liberation Serif" text-anchor="start" textLength="14" lengthAdjust="spacingAndGlyphs">12.图注</text>
<text x="752" y="229.5" fill="#a00000" font-size="4.2" font-family="Liberation Serif" text-anchor="start" textLength="38" lengthAdjust="spacingAndGlyphs">墙体节点范围墙体(PC)</text>
<text x="752" y="236" fill="#a00000" font-size="4.2" font-family="Liberation Serif" text-anchor="start" textLength="40" lengthAdjust="spacingAndGlyphs">墙体节点范围墙体(PC)</text>
<text x="752" y="243" fill="#a00000" font-size="4.2" font-family="Liberation Serif" text-anchor="start" textLength="18" lengthAdjust="spacingAndGlyphs">墙体节点</text>
<text x="752" y="250.5" fill="#a00000" font-size="4.2" font-family="Liberation Serif" text-anchor="start" textLength="20" lengthAdjust="spacingAndGlyphs">墙体剪力墙</text>
<text x="752" y="258.5" fill="#a00000" font-size="4.2" font-family="Liberation Serif" text-anchor="start" textLength="18" lengthAdjust="spacingAndGlyphs">墙体外墙</text>
<rect x="741.5" y="172.8" width="7.0" height="3.0999999999999943" stroke="#e8e800" stroke-width="1" fill="#555"/>
<rect x="741.5" y="178" width="7.0" height="3.5" stroke="#e8e800" stroke-width="1" fill="none"/>
<rect x="741.5" y="182.5" width="7.0" height="3.0999999999999943" stroke="#e8e800" stroke-width="1.2" fill="none"/>
<path d="M743 187.3h4a1.6 1.6 0 0 1 0 3.2h-4a1.6 1.6 0 0 1 0-3.2z" stroke="#e8e8e8" stroke-width="1" fill="none"/>
<rect x="740" y="194" width="9" height="4" stroke="#ff9000" stroke-width="1" fill="#803000"/>
<line x1="741" y1="197" x2="748" y2="195" stroke="#fff" stroke-width="1"/>
<line x1="741" y1="203.5" x2="745" y2="201.5" stroke="#d010e0" stroke-width="1.5"/>
<rect x="744" y="205" width="9" height="6" fill="#c8c8c8"/>
<rect x="744" y="205" width="9" height="6" stroke="#e00000" stroke-width="0.8" fill="none"/>
<rect x="744" y="212.8" width="9" height="3.8999999999999773" fill="#f0f0f0"/>
<rect x="744" y="212.8" width="9" height="3.8999999999999773" stroke="#e00000" stroke-width="0.8" fill="none"/>
<rect x="744" y="220" width="9" height="4.599999999999994" fill="#a8a8a8"/>
<rect x="744" y="220" width="9" height="4.599999999999994" stroke="#e00000" stroke-width="0.8" fill="none"/>
<line x1="742" y1="228.2" x2="750" y2="228.2" stroke="#ff2020" stroke-width="1"/>
<rect x="742.8" y="233" width="7.900000000000091" height="4" fill="#f0fff0"/>
<line x1="742" y1="249.4" x2="750" y2="249.4" stroke="#10e010" stroke-width="1"/>
<line x1="742" y1="257.3" x2="750" y2="257.3" stroke="#005050" stroke-width="1"/>
<text x="729" y="331" fill="#00b0b0" font-size="4.6" font-family="Liberation Serif" text-anchor="start" >工程名称:</text>
<text x="730" y="341" fill="#00c8c8" font-size="8" font-family="Liberation Serif" text-anchor="start" >云南金利时代中心</text>
<text x="754" y="350" fill="#00c8c8" font-size="7" font-family="Liberation Serif" text-anchor="start" >6#楼</text>
<text x="729" y="361" fill="#00b0b0" font-size="4.6" font-family="Liberation Serif" text-anchor="start" >图纸名称:</text>
<text x="729" y="370" fill="#00b8b8" font-size="6.2" font-family="Liberation Serif" text-anchor="start" >铝合金模板设计资料明</text>
<text x="732" y="392" fill="#00c0c0" font-size="6.5" font-family="Liberation Serif" text-anchor="start" >制图</text>
<text x="759" y="392" fill="#00c8c8" font-size="6.5" font-family="Liberation Serif" text-anchor="start" >某某某</text>
<text x="732" y="404" fill="#00c0c0" font-size="6.5" font-family="Liberation Serif" text-anchor="start" >审定</text>
<text x="732" y="417" fill="#00c0c0" font-size="6.5" font-family="Liberation Serif" text-anchor="start" >批准</text>
<text x="732" y="429.5" fill="#00c0c0" font-size="6.5" font-family="Liberation Serif" text-anchor="start" >页数</text>
<text x="753" y="429" fill="#00a8a8" font-size="4.5" font-family="Liberation Serif" text-anchor="start" >第  页,共  页</text>
<text x="730" y="442.5" fill="#00b0b0" font-size="4.2" font-family="Liberation Serif" text-anchor="start" >工程编号</text>
<text x="760" y="443" fill="#00c0c0" font-size="6" font-family="Liberation Serif" text-anchor="start" >TS-??</text>
<text x="730" y="455.5" fill="#00b0b0" font-size="4.2" font-family="Liberation Serif" text-anchor="start" >出案日期</text>
<text x="756" y="456" fill="#00c0c0" font-size="6" font-family="Liberation Serif" text-anchor="start" >2016/02/02</text>
<text x="730" y="468.5" fill="#00b0b0" font-size="4.2" font-family="Liberation Serif" text-anchor="start" >联系电话</text>
<text x="751" y="468" fill="#00a8a8" font-size="4.2" font-family="Liberation Serif" text-anchor="start" >TEL 1389 1197457</text>
<line x1="360" y1="179.4" x2="410" y2="179.4" stroke="#e00000" stroke-width="0.9"/>
<line x1="360" y1="188" x2="680" y2="188" stroke="#e00000" stroke-width="0.9"/>
<line x1="360" y1="198" x2="680" y2="198" stroke="#e00000" stroke-width="0.9"/>
<line x1="360" y1="217.3" x2="680" y2="217.3" stroke="#e00000" stroke-width="0.9"/>
<line x1="360" y1="229.5" x2="680" y2="229.5" stroke="#e00000" stroke-width="1.2"/>
<line x1="360" y1="242.2" x2="680" y2="242.2" stroke="#e00000" stroke-width="0.9"/>
<line x1="360" y1="249.9" x2="680" y2="249.9" stroke="#e00000" stroke-width="0.9"/>
<line x1="360" y1="265.4" x2="680" y2="265.4" stroke="#e00000" stroke-width="0.9"/>
<line x1="360" y1="295.5" x2="680" y2="295.5" stroke="#e00000" stroke-width="0.6"/>
<line x1="360" y1="304.3" x2="680" y2="304.3" stroke="#e00000" stroke-width="0.9"/>
<line x1="600" y1="310.4" x2="680" y2="310.4" stroke="#e00000" stroke-width="0.9"/>
<line x1="360" y1="317.2" x2="680" y2="317.2" stroke="#e00000" stroke-width="0.9"/>
<circle cx="381" cy="147.3" r="3.1" stroke="#e8e800" stroke-width="1" fill="none"/>
<text x="381" y="148.8" fill="#c8c800" font-size="3.6" font-family="Liberation Sans" text-anchor="middle" >1</text>
<line x1="381" y1="150.5" x2="381" y2="168" stroke="#b0a000" stroke-width="0.8"/>
<line x1="381" y1="170" x2="381" y2="232" stroke="#a00000" stroke-width="0.8"/>
<circle cx="406" cy="147.3" r="3.1" stroke="#e8e800" stroke-width="1" fill="none"/>
<text x="406" y="148.8" fill="#c8c800" font-size="3.6" font-family="Liberation Sans" text-anchor="middle" >2</text>
<line x1="406" y1="150.5" x2="406" y2="168" stroke="#b0a000" stroke-width="0.8"/>
<line x1="406" y1="170" x2="406" y2="232" stroke="#a00000" stroke-width="0.8"/>
<circle cx="434.5" cy="147.3" r="3.1" stroke="#e8e800" stroke-width="1" fill="none"/>
<text x="434.5" y="148.8" fill="#c8c800" font-size="3.6" font-family="Liberation Sans" text-anchor="middle" >3</text>
<line x1="434.5" y1="150.5" x2="434.5" y2="168" stroke="#b0a000" stroke-width="0.8"/>
<line x1="434.5" y1="170" x2="434.5" y2="232" stroke="#a00000" stroke-width="0.8"/>
<circle cx="462.3" cy="147.3" r="3.1" stroke="#e8e800" stroke-width="1" fill="none"/>
<text x="462.3" y="148.8" fill="#c8c800" font-size="3.6" font-family="Liberation Sans" text-anchor="middle" >4</text>
<line x1="462.3" y1="150.5" x2="462.3" y2="168" stroke="#b0a000" stroke-width="0.8"/>
<line x1="462.3" y1="170" x2="462.3" y2="232" stroke="#a00000" stroke-width="0.8"/>
<circle cx="477.4" cy="147.3" r="3.1" stroke="#e8e800" stroke-width="1" fill="none"/>
<text x="477.4" y="148.8" fill="#c8c800" font-size="3.6" font-family="Liberation Sans" text-anchor="middle" >5</text>
<line x1="477.4" y1="150.5" x2="477.4" y2="168" stroke="#b0a000" stroke-width="0.8"/>
<line x1="477.4" y1="170" x2="477.4" y2="232" stroke="#a00000" stroke-width="0.8"/>
<circle cx="512.5" cy="147.3" r="3.1" stroke="#e8e800" stroke-width="1" fill="none"/>
<text x="512.5" y="148.8" fill="#c8c800" font-size="3.6" font-family="Liberation Sans" text-anchor="middle" >6</text>
<line x1="512.5" y1="150.5" x2="512.5" y2="168" stroke="#b0a000" stroke-width="0.8"/>
<line x1="512.5" y1="170" x2="512.5" y2="232" stroke="#a00000" stroke-width="0.8"/>
<circle cx="536.1" cy="147.3" r="3.1" stroke="#e8e800" stroke-width="1" fill="none"/>
<text x="536.1" y="148.8" fill="#c8c800" font-size="3.6" font-family="Liberation Sans" text-anchor="middle" >7</text>
<line x1="536.1" y1="150.5" x2="536.1" y2="168" stroke="#b0a000" stroke-width="0.8"/>
<line x1="536.1" y1="170" x2="536.1" y2="232" stroke="#a00000" stroke-width="0.8"/>
<circle cx="552.8" cy="147.3" r="3.1" stroke="#e8e800" stroke-width="1" fill="none"/>
<text x="552.8" y="148.8" fill="#c8c800" font-size="3.6" font-family="Liberation Sans" text-anchor="middle" >8</text>
<line x1="552.8" y1="150.5" x2="552.8" y2="168" stroke="#b0a000" stroke-width="0.8"/>
<line x1="552.8" y1="170" x2="552.8" y2="232" stroke="#a00000" stroke-width="0.8"/>
<circle cx="582.4" cy="147.3" r="3.1" stroke="#e8e800" stroke-width="1" fill="none"/>
<text x="582.4" y="148.8" fill="#c8c800" font-size="3.6" font-family="Liberation Sans" text-anchor="middle" >9</text>
<line x1="582.4" y1="150.5" x2="582.4" y2="168" stroke="#b0a000" stroke-width="0.8"/>
<line x1="582.4" y1="170" x2="582.4" y2="232" stroke="#a00000" stroke-width="0.8"/>
<circle cx="594.2" cy="147.3" r="3.1" stroke="#e8e800" stroke-width="1" fill="none"/>
<text x="594.2" y="148.8" fill="#c8c800" font-size="3.6" font-family="Liberation Sans" text-anchor="middle" >10</text>
<line x1="594.2" y1="150.5" x2="594.2" y2="168" stroke="#b0a000" stroke-width="0.8"/>
<line x1="594.2" y1="170" x2="594.2" y2="232" stroke="#a00000" stroke-width="0.8"/>
<circle cx="621.1" cy="147.3" r="3.1" stroke="#e8e800" stroke-width="1" fill="none"/>
<text x="621.1" y="148.8" fill="#c8c800" font-size="3.6" font-family="Liberation Sans" text-anchor="middle" >11</text>
<line x1="621.1" y1="150.5" x2="621.1" y2="168" stroke="#b0a000" stroke-width="0.8"/>
<line x1="621.1" y1="170" x2="621.1" y2="232" stroke="#a00000" stroke-width="0.8"/>
<circle cx="661.4" cy="147.3" r="3.1" stroke="#e8e800" stroke-width="1" fill="none"/>
<text x="661.4" y="148.8" fill="#c8c800" font-size="3.6" font-family="Liberation Sans" text-anchor="middle" >12</text>
<line x1="661.4" y1="150.5" x2="661.4" y2="168" stroke="#b0a000" stroke-width="0.8"/>
<line x1="661.4" y1="170" x2="661.4" y2="232" stroke="#a00000" stroke-width="0.8"/>
<circle cx="673.2" cy="147.3" r="3.1" stroke="#e8e800" stroke-width="1" fill="none"/>
<text x="673.2" y="148.8" fill="#c8c800" font-size="3.6" font-family="Liberation Sans" text-anchor="middle" >13</text>
<line x1="673.2" y1="150.5" x2="673.2" y2="168" stroke="#b0a000" stroke-width="0.8"/>
<line x1="673.2" y1="170" x2="673.2" y2="232" stroke="#a00000" stroke-width="0.8"/>
<text x="393" y="162" fill="#c8c8c8" font-size="3.6" font-family="Liberation Sans" text-anchor="middle" >1100</text>
<text x="420" y="162" fill="#c8c8c8" font-size="3.6" font-family="Liberation Sans" text-anchor="middle" >1100</text>
<text x="448" y="162" fill="#c8c8c8" font-size="3.6" font-family="Liberation Sans" text-anchor="middle" >2600</text>
<text x="470" y="162" fill="#c8c8c8" font-size="3.6" font-family="Liberation Sans" text-anchor="middle" >1100</text>
<text x="495" y="162" fill="#c8c8c8" font-size="3.6" font-family="Liberation Sans" text-anchor="middle" >4100</text>
<text x="524" y="162" fill="#c8c8c8" font-size="3.6" font-family="Liberation Sans" text-anchor="middle" >2100</text>
<text x="544" y="162" fill="#c8c8c8" font-size="3.6" font-family="Liberation Sans" text-anchor="middle" >1400</text>
<text x="567" y="162" fill="#c8c8c8" font-size="3.6" font-family="Liberation Sans" text-anchor="middle" >2100</text>
<text x="588" y="162" fill="#c8c8c8" font-size="3.6" font-family="Liberation Sans" text-anchor="middle" >1800</text>
<text x="607" y="162" fill="#c8c8c8" font-size="3.6" font-family="Liberation Sans" text-anchor="middle" >1400</text>
<text x="641" y="162" fill="#c8c8c8" font-size="3.6" font-family="Liberation Sans" text-anchor="middle" >2400</text>
<text x="667" y="162" fill="#c8c8c8" font-size="3.6" font-family="Liberation Sans" text-anchor="middle" >1100</text>
<text x="522" y="156" fill="#c8c8c8" font-size="3.6" font-family="Liberation Sans" text-anchor="middle" >21300</text>
<circle cx="335.5" cy="172.6" r="3.1" stroke="#e8e800" stroke-width="1" fill="none"/>
<text x="335.5" y="174.0" fill="#b0b000" font-size="3.6" font-family="Liberation Sans" text-anchor="middle" >A</text>
<line x1="338.6" y1="172.6" x2="358" y2="172.6" stroke="#c8c000" stroke-width="0.7"/>
<circle cx="335.5" cy="179.7" r="3.1" stroke="#e8e800" stroke-width="1" fill="none"/>
<text x="335.5" y="181.1" fill="#b0b000" font-size="3.6" font-family="Liberation Sans" text-anchor="middle" >B</text>
<line x1="338.6" y1="179.7" x2="358" y2="179.7" stroke="#c8c000" stroke-width="0.7"/>
<circle cx="335.5" cy="185.3" r="3.1" stroke="#e8e800" stroke-width="1" fill="none"/>
<text x="335.5" y="186.70000000000002" fill="#b0b000" font-size="3.6" font-family="Liberation Sans" text-anchor="middle" >C</text>
<line x1="338.6" y1="185.3" x2="358" y2="185.3" stroke="#c8c000" stroke-width="0.7"/>
<circle cx="335.5" cy="190.7" r="3.1" stroke="#e8e800" stroke-width="1" fill="none"/>
<text x="335.5" y="192.1" fill="#b0b000" font-size="3.6" font-family="Liberation Sans" text-anchor="middle" >D</text>
<line x1="338.6" y1="190.7" x2="358" y2="190.7" stroke="#c8c000" stroke-width="0.7"/>
<circle cx="335.5" cy="198.6" r="3.1" stroke="#e8e800" stroke-width="1" fill="none"/>
<text x="335.5" y="200.0" fill="#b0b000" font-size="3.6" font-family="Liberation Sans" text-anchor="middle" >E</text>
<line x1="338.6" y1="198.6" x2="358" y2="198.6" stroke="#c8c000" stroke-width="1"/>
<circle cx="335.5" cy="209.6" r="3.1" stroke="#e8e800" stroke-width="1" fill="none"/>
<text x="335.5" y="211.0" fill="#b0b000" font-size="3.6" font-family="Liberation Sans" text-anchor="middle" >F</text>
<line x1="338.6" y1="209.6" x2="358" y2="209.6" stroke="#c8c000" stroke-width="0.7"/>
<circle cx="335.5" cy="217.9" r="3.1" stroke="#e8e800" stroke-width="1" fill="none"/>
<text x="335.5" y="219.3" fill="#b0b000" font-size="3.6" font-family="Liberation Sans" text-anchor="middle" >G</text>
<line x1="338.6" y1="217.9" x2="358" y2="217.9" stroke="#c8c000" stroke-width="0.7"/>
<circle cx="335.5" cy="229.4" r="3.1" stroke="#e8e800" stroke-width="1" fill="none"/>
<text x="335.5" y="230.8" fill="#b0b000" font-size="3.6" font-family="Liberation Sans" text-anchor="middle" >H</text>
<line x1="338.6" y1="229.4" x2="358" y2="229.4" stroke="#c8c000" stroke-width="1"/>
<circle cx="335.5" cy="242.4" r="3.1" stroke="#e8e800" stroke-width="1" fill="none"/>
<text x="335.5" y="243.8" fill="#b0b000" font-size="3.6" font-family="Liberation Sans" text-anchor="middle" >J</text>
<line x1="338.6" y1="242.4" x2="358" y2="242.4" stroke="#c8c000" stroke-width="0.7"/>
<circle cx="335.5" cy="248.5" r="3.1" stroke="#e8e800" stroke-width="1" fill="none"/>
<text x="335.5" y="249.9" fill="#b0b000" font-size="3.6" font-family="Liberation Sans" text-anchor="middle" >K</text>
<line x1="338.6" y1="248.5" x2="358" y2="248.5" stroke="#c8c000" stroke-width="0.7"/>
<circle cx="335.5" cy="265.2" r="3.1" stroke="#e8e800" stroke-width="1" fill="none"/>
<text x="335.5" y="266.59999999999997" fill="#b0b000" font-size="3.6" font-family="Liberation Sans" text-anchor="middle" >L</text>
<line x1="338.6" y1="265.2" x2="358" y2="265.2" stroke="#c8c000" stroke-width="1"/>
<circle cx="335.5" cy="295" r="3.1" stroke="#e8e800" stroke-width="1" fill="none"/>
<text x="335.5" y="296.4" fill="#b0b000" font-size="3.6" font-family="Liberation Sans" text-anchor="middle" >M</text>
<line x1="338.6" y1="295" x2="358" y2="295" stroke="#c8c000" stroke-width="0.7"/>
<circle cx="335.5" cy="302.3" r="3.1" stroke="#e8e800" stroke-width="1" fill="none"/>
<text x="335.5" y="303.7" fill="#b0b000" font-size="3.6" font-family="Liberation Sans" text-anchor="middle" >N</text>
<line x1="338.6" y1="302.3" x2="358" y2="302.3" stroke="#c8c000" stroke-width="0.7"/>
<circle cx="335.5" cy="310" r="3.1" stroke="#e8e800" stroke-width="1" fill="none"/>
<text x="335.5" y="311.4" fill="#b0b000" font-size="3.6" font-family="Liberation Sans" text-anchor="middle" >P</text>
<line x1="338.6" y1="310" x2="358" y2="310" stroke="#c8c000" stroke-width="0.7"/>
<circle cx="335.5" cy="316.5" r="3.1" stroke="#e8e800" stroke-width="1" fill="none"/>
<text x="335.5" y="317.9" fill="#b0b000" font-size="3.6" font-family="Liberation Sans" text-anchor="middle" >Q</text>
<line x1="338.6" y1="316.5" x2="358" y2="316.5" stroke="#c8c000" stroke-width="0.7"/>
<text x="349" y="180" fill="#c0c0c0" font-size="3.4" font-family="Liberation Sans" text-anchor="middle" transform="rotate(-90 349 180)">1200</text>
<text x="349" y="190" fill="#c0c0c0" font-size="3.4" font-family="Liberation Sans" text-anchor="middle" transform="rotate(-90 349 190)">1500</text>
<text x="349" y="205" fill="#c0c0c0" font-size="3.4" font-family="Liberation Sans" text-anchor="middle" transform="rotate(-90 349 205)">2500</text>
<text x="349" y="222" fill="#c0c0c0" font-size="3.4" font-family="Liberation Sans" text-anchor="middle" transform="rotate(-90 349 222)">1900</text>
<text x="349" y="236" fill="#c0c0c0" font-size="3.4" font-family="Liberation Sans" text-anchor="middle" transform="rotate(-90 349 236)">2150</text>
<text x="349" y="257" fill="#c0c0c0" font-size="3.4" font-family="Liberation Sans" text-anchor="middle" transform="rotate(-90 349 257)">2600</text>
<text x="349" y="282" fill="#c0c0c0" font-size="3.4" font-family="Liberation Sans" text-anchor="middle" transform="rotate(-90 349 282)">3900</text>
<text x="349" y="306" fill="#c0c0c0" font-size="3.4" font-family="Liberation Sans" text-anchor="middle" transform="rotate(-90 349 306)">2500</text>
<circle cx="706.4" cy="175.7" r="3.1" stroke="#e8e800" stroke-width="1" fill="none"/>
<text x="706.4" y="177.1" fill="#b0b000" font-size="3.6" font-family="Liberation Sans" text-anchor="middle" >A</text>
<line x1="682" y1="175.7" x2="703.3" y2="175.7" stroke="#c8c000" stroke-width="0.8"/>
<circle cx="706.4" cy="187.6" r="3.1" stroke="#e8e800" stroke-width="1" fill="none"/>
<text x="706.4" y="189.0" fill="#b0b000" font-size="3.6" font-family="Liberation Sans" text-anchor="middle" >B</text>
<line x1="682" y1="187.6" x2="703.3" y2="187.6" stroke="#c8c000" stroke-width="0.8"/>
<circle cx="706.4" cy="190" r="3.1" stroke="#e8e800" stroke-width="1" fill="none"/>
<text x="706.4" y="191.4" fill="#b0b000" font-size="3.6" font-family="Liberation Sans" text-anchor="middle" >C</text>
<line x1="682" y1="190" x2="703.3" y2="190" stroke="#c8c000" stroke-width="0.8"/>
<circle cx="706.4" cy="198" r="3.1" stroke="#e8e800" stroke-width="1" fill="none"/>
<text x="706.4" y="199.4" fill="#b0b000" font-size="3.6" font-family="Liberation Sans" text-anchor="middle" >D</text>
<line x1="682" y1="198" x2="703.3" y2="198" stroke="#c8c000" stroke-width="0.8"/>
<circle cx="706.4" cy="204.5" r="3.1" stroke="#e8e800" stroke-width="1" fill="none"/>
<text x="706.4" y="205.9" fill="#b0b000" font-size="3.6" font-family="Liberation Sans" text-anchor="middle" >E</text>
<line x1="682" y1="204.5" x2="703.3" y2="204.5" stroke="#c8c000" stroke-width="0.8"/>
<circle cx="706.4" cy="212.4" r="3.1" stroke="#e8e800" stroke-width="1" fill="none"/>
<text x="706.4" y="213.8" fill="#b0b000" font-size="3.6" font-family="Liberation Sans" text-anchor="middle" >F</text>
<line x1="682" y1="212.4" x2="703.3" y2="212.4" stroke="#c8c000" stroke-width="0.8"/>
<circle cx="706.4" cy="221.1" r="3.1" stroke="#e8e800" stroke-width="1" fill="none"/>
<text x="706.4" y="222.5" fill="#b0b000" font-size="3.6" font-family="Liberation Sans" text-anchor="middle" >G</text>
<line x1="682" y1="221.1" x2="703.3" y2="221.1" stroke="#c8c000" stroke-width="0.8"/>
<circle cx="706.4" cy="229.5" r="3.1" stroke="#e8e800" stroke-width="1" fill="none"/>
<text x="706.4" y="230.9" fill="#b0b000" font-size="3.6" font-family="Liberation Sans" text-anchor="middle" >H</text>
<line x1="682" y1="229.5" x2="703.3" y2="229.5" stroke="#c8c000" stroke-width="0.8"/>
<circle cx="706.4" cy="242.4" r="3.1" stroke="#e8e800" stroke-width="1" fill="none"/>
<text x="706.4" y="243.8" fill="#b0b000" font-size="3.6" font-family="Liberation Sans" text-anchor="middle" >J</text>
<line x1="682" y1="242.4" x2="703.3" y2="242.4" stroke="#c8c000" stroke-width="0.8"/>
<circle cx="706.4" cy="265.4" r="3.1" stroke="#e8e800" stroke-width="1" fill="none"/>
<text x="706.4" y="266.79999999999995" fill="#b0b000" font-size="3.6" font-family="Liberation Sans" text-anchor="middle" >K</text>
<line x1="682" y1="265.4" x2="703.3" y2="265.4" stroke="#c8c000" stroke-width="0.8"/>
<circle cx="706.4" cy="301.8" r="3.1" stroke="#e8e800" stroke-width="1" fill="none"/>
<text x="706.4" y="303.2" fill="#b0b000" font-size="3.6" font-family="Liberation Sans" text-anchor="middle" >L</text>
<line x1="682" y1="301.8" x2="703.3" y2="301.8" stroke="#c8c000" stroke-width="0.8"/>
<circle cx="706.4" cy="309.9" r="3.1" stroke="#e8e800" stroke-width="1" fill="none"/>
<text x="706.4" y="311.29999999999995" fill="#b0b000" font-size="3.6" font-family="Liberation Sans" text-anchor="middle" >M</text>
<line x1="682" y1="309.9" x2="703.3" y2="309.9" stroke="#c8c000" stroke-width="0.8"/>
<circle cx="706.4" cy="317.2" r="3.1" stroke="#e8e800" stroke-width="1" fill="none"/>
<text x="706.4" y="318.59999999999997" fill="#b0b000" font-size="3.6" font-family="Liberation Sans" text-anchor="middle" >N</text>
<line x1="682" y1="317.2" x2="703.3" y2="317.2" stroke="#c8c000" stroke-width="0.8"/>
<text x="688" y="182" fill="#c0c0c0" font-size="3.4" font-family="Liberation Sans" text-anchor="middle" transform="rotate(-90 688 182)">2300</text>
<text x="688" y="210" fill="#c0c0c0" font-size="3.4" font-family="Liberation Sans" text-anchor="middle" transform="rotate(-90 688 210)">2900</text>
<text x="688" y="232" fill="#c0c0c0" font-size="3.4" font-family="Liberation Sans" text-anchor="middle" transform="rotate(-90 688 232)">1700</text>
<text x="688" y="255" fill="#c0c0c0" font-size="3.4" font-family="Liberation Sans" text-anchor="middle" transform="rotate(-90 688 255)">2100</text>
<text x="688" y="285" fill="#c0c0c0" font-size="3.4" font-family="Liberation Sans" text-anchor="middle" transform="rotate(-90 688 285)">3000</text>
<text x="688" y="306" fill="#c0c0c0" font-size="3.4" font-family="Liberation Sans" text-anchor="middle" transform="rotate(-90 688 306)">1800</text>
<circle cx="381.5" cy="351.1" r="3.1" stroke="#e8e8e8" stroke-width="1" fill="none"/>
<text x="381.5" y="352.5" fill="#e8e8e8" font-size="3.6" font-family="Liberation Sans" text-anchor="middle" >A</text>
<line x1="381.5" y1="327" x2="381.5" y2="347.9" stroke="#a09000" stroke-width="0.9"/>
<circle cx="409.7" cy="351.1" r="3.1" stroke="#e8e8e8" stroke-width="1" fill="none"/>
<text x="409.7" y="352.5" fill="#e8e8e8" font-size="3.6" font-family="Liberation Sans" text-anchor="middle" >A</text>
<line x1="409.7" y1="327" x2="409.7" y2="347.9" stroke="#a09000" stroke-width="0.9"/>
<circle cx="434.3" cy="351.1" r="3.1" stroke="#e8e8e8" stroke-width="1" fill="none"/>
<text x="434.3" y="352.5" fill="#e8e8e8" font-size="3.6" font-family="Liberation Sans" text-anchor="middle" >A</text>
<line x1="434.3" y1="327" x2="434.3" y2="347.9" stroke="#a09000" stroke-width="0.9"/>
<circle cx="482.3" cy="351.1" r="3.1" stroke="#e8e8e8" stroke-width="1" fill="none"/>
<text x="482.3" y="352.5" fill="#e8e8e8" font-size="3.6" font-family="Liberation Sans" text-anchor="middle" >A</text>
<line x1="482.3" y1="327" x2="482.3" y2="347.9" stroke="#a09000" stroke-width="0.9"/>
<circle cx="494.7" cy="351.1" r="3.1" stroke="#e8e8e8" stroke-width="1" fill="none"/>
<text x="494.7" y="352.5" fill="#e8e8e8" font-size="3.6" font-family="Liberation Sans" text-anchor="middle" >A</text>
<line x1="494.7" y1="327" x2="494.7" y2="347.9" stroke="#a09000" stroke-width="0.9"/>
<circle cx="512.4" cy="351.1" r="3.1" stroke="#e8e8e8" stroke-width="1" fill="none"/>
<text x="512.4" y="352.5" fill="#e8e8e8" font-size="3.6" font-family="Liberation Sans" text-anchor="middle" >A</text>
<line x1="512.4" y1="327" x2="512.4" y2="347.9" stroke="#a09000" stroke-width="0.9"/>
<circle cx="530.2" cy="351.1" r="3.1" stroke="#e8e8e8" stroke-width="1" fill="none"/>
<text x="530.2" y="352.5" fill="#e8e8e8" font-size="3.6" font-family="Liberation Sans" text-anchor="middle" >A</text>
<line x1="530.2" y1="327" x2="530.2" y2="347.9" stroke="#a09000" stroke-width="0.9"/>
<circle cx="542.6" cy="351.1" r="3.1" stroke="#e8e8e8" stroke-width="1" fill="none"/>
<text x="542.6" y="352.5" fill="#e8e8e8" font-size="3.6" font-family="Liberation Sans" text-anchor="middle" >A</text>
<line x1="542.6" y1="327" x2="542.6" y2="347.9" stroke="#a09000" stroke-width="0.9"/>
<circle cx="590.3" cy="351.1" r="3.1" stroke="#e8e800" stroke-width="1" fill="none"/>
<text x="590.3" y="352.5" fill="#e8e800" font-size="3.6" font-family="Liberation Sans" text-anchor="middle" >A</text>
<line x1="590.3" y1="327" x2="590.3" y2="347.9" stroke="#e8e800" stroke-width="0.9"/>
<circle cx="621.6" cy="351.1" r="3.1" stroke="#e8e800" stroke-width="1" fill="none"/>
<text x="621.6" y="352.5" fill="#e8e800" font-size="3.6" font-family="Liberation Sans" text-anchor="middle" >A</text>
<line x1="621.6" y1="327" x2="621.6" y2="347.9" stroke="#e8e800" stroke-width="0.9"/>
<circle cx="661.3" cy="351.1" r="3.1" stroke="#e8e800" stroke-width="1" fill="none"/>
<text x="661.3" y="352.5" fill="#e8e800" font-size="3.6" font-family="Liberation Sans" text-anchor="middle" >A</text>
<line x1="661.3" y1="327" x2="661.3" y2="347.9" stroke="#e8e800" stroke-width="0.9"/>
<circle cx="673" cy="351.1" r="3.1" stroke="#e8e800" stroke-width="1" fill="none"/>
<text x="673" y="352.5" fill="#e8e800" font-size="3.6" font-family="Liberation Sans" text-anchor="middle" >A</text>
<line x1="673" y1="327" x2="673" y2="347.9" stroke="#e8e800" stroke-width="0.9"/>
<text x="396" y="335" fill="#b8b8b8" font-size="3.6" font-family="Liberation Sans" text-anchor="middle" >4400</text>
<text x="422" y="335" fill="#b8b8b8" font-size="3.6" font-family="Liberation Sans" text-anchor="middle" >2100</text>
<text x="458" y="335" fill="#b8b8b8" font-size="3.6" font-family="Liberation Sans" text-anchor="middle" >6100</text>
<text x="488" y="335" fill="#b8b8b8" font-size="3.6" font-family="Liberation Sans" text-anchor="middle" >1100</text>
<text x="503" y="335" fill="#b8b8b8" font-size="3.6" font-family="Liberation Sans" text-anchor="middle" >2400</text>
<text x="521" y="335" fill="#b8b8b8" font-size="3.6" font-family="Liberation Sans" text-anchor="middle" >1100</text>
<text x="537" y="335" fill="#b8b8b8" font-size="3.6" font-family="Liberation Sans" text-anchor="middle" >1100</text>
<text x="567" y="335" fill="#b8b8b8" font-size="3.6" font-family="Liberation Sans" text-anchor="middle" >4200</text>
<text x="606" y="335" fill="#b8b8b8" font-size="3.6" font-family="Liberation Sans" text-anchor="middle" >3000</text>
<text x="641" y="335" fill="#b8b8b8" font-size="3.6" font-family="Liberation Sans" text-anchor="middle" >5100</text>
<text x="667" y="335" fill="#b8b8b8" font-size="3.6" font-family="Liberation Sans" text-anchor="middle" >1100</text>
<text x="528" y="340" fill="#b8b8b8" font-size="3.6" font-family="Liberation Sans" text-anchor="middle" >21300</text>
<line x1="380.8" y1="190.6" x2="380.8" y2="300" stroke="#c8a800" stroke-width="1.2"/>
<line x1="380.8" y1="190.6" x2="433.7" y2="190.6" stroke="#ff9000" stroke-width="1.2"/>
<line x1="394" y1="190.6" x2="405" y2="190.6" stroke="#00d8d8" stroke-width="1.2"/>
<path d="M386 190.6 L386 186 L401.4 186 L401.4 190.6" stroke="#10e010" stroke-width="1.3" fill="none"/>
<line x1="405.8" y1="178.3" x2="405.8" y2="191" stroke="#10e010" stroke-width="1.2"/>
<line x1="405.8" y1="191" x2="405.8" y2="217.6" stroke="#ff9000" stroke-width="1.2"/>
<line x1="405.8" y1="178.3" x2="434.6" y2="178.3" stroke="#10e010" stroke-width="1"/>
<line x1="406" y1="179.5" x2="434" y2="179.5" stroke="#00d8d8" stroke-width="1.2"/>
<line x1="434.6" y1="177" x2="434.6" y2="230" stroke="#ff9000" stroke-width="1.3"/>
<line x1="432.5" y1="178" x2="432.5" y2="217" stroke="#e8e800" stroke-width="1"/>
<line x1="382" y1="217.8" x2="406" y2="217.8" stroke="#e8e800" stroke-width="2"/>
<line x1="420" y1="192" x2="420" y2="217.6" stroke="#00d8d8" stroke-width="1.5"/>
<line x1="406" y1="209" x2="419" y2="209" stroke="#00d8d8" stroke-width="1.5"/>
<line x1="406" y1="217.8" x2="434" y2="217.8" stroke="#00d8d8" stroke-width="1"/>
<line x1="436" y1="217.8" x2="462" y2="217.8" stroke="#00d8d8" stroke-width="1"/>
<line x1="394" y1="181" x2="394" y2="191" stroke="#e8e8e8" stroke-width="1"/>
<path d="M461.7 217.6 L461.7 193 L477.4 193" stroke="#00d8d8" stroke-width="1.2" fill="none"/>
<path d="M461.7 197 L461.7 217.6" stroke="#e8e800" stroke-width="1" fill="none"/>
<rect x="477.4" y="188" width="60.200000000000045" height="22.599999999999994" stroke="#e8e800" stroke-width="1.2" fill="none"/>
<line x1="477.4" y1="200" x2="477.4" y2="210" stroke="#10e010" stroke-width="2"/>
<line x1="462" y1="216" x2="512" y2="216" stroke="#00d8d8" stroke-width="1.3"/>
<line x1="512" y1="210.6" x2="550" y2="210.6" stroke="#e8e800" stroke-width="1.2"/>
<line x1="512" y1="210" x2="512" y2="230" stroke="#e8e800" stroke-width="1"/>
<circle cx="530.6" cy="211.5" r="2.8" stroke="#e8e800" stroke-width="1" fill="none"/>
<line x1="434.6" y1="229.5" x2="674" y2="229.5" stroke="#e8e800" stroke-width="1.4"/>
<path d="M436 231 L481 231 L479 240.7 L436 240.7 z" stroke="#e8e8e8" stroke-width="1" fill="none"/>
<line x1="436" y1="240.7" x2="480" y2="240.7" stroke="#ff9000" stroke-width="1"/>
<circle cx="469" cy="238.6" r="2.6" stroke="#e8e800" stroke-width="1" fill="none"/>
<rect x="494.8" y="230" width="16.599999999999966" height="17" stroke="#e8e800" stroke-width="1" fill="none"/>
<rect x="513" y="230" width="16.700000000000045" height="20" stroke="#e8e800" stroke-width="1" fill="none"/>
<line x1="481" y1="231" x2="481" y2="260" stroke="#00d8d8" stroke-width="1.2"/>
<line x1="381" y1="249" x2="410" y2="249" stroke="#ff9000" stroke-width="1.2"/>
<line x1="410" y1="249" x2="432" y2="249" stroke="#00d8d8" stroke-width="1.2"/>
<line x1="397" y1="241" x2="397" y2="259" stroke="#e8e8e8" stroke-width="1"/>
<rect x="593.2" y="174.8" width="69.0" height="27.099999999999994" stroke="#e8e800" stroke-width="1.2" fill="none"/>
<line x1="603" y1="175" x2="613" y2="175" stroke="#10e010" stroke-width="1.5"/>
<line x1="613" y1="175" x2="620" y2="175" stroke="#d010e0" stroke-width="1.5"/>
<line x1="620" y1="175" x2="627" y2="175" stroke="#10e010" stroke-width="1.5"/>
<rect x="581" y="187" width="13" height="15" stroke="#00d8d8" stroke-width="1.2" fill="none"/>
<path d="M617.7 202 L617.7 192 L630.8 192 L630.8 202" stroke="#e8e8e8" stroke-width="1.2" fill="none"/>
<line x1="630.8" y1="176" x2="630.8" y2="202" stroke="#00d8d8" stroke-width="1.2"/>
<line x1="610" y1="176" x2="610" y2="202" stroke="#00a0a0" stroke-width="0.8"/>
<rect x="662" y="181" width="4.600000000000023" height="15.699999999999989" stroke="#10e010" stroke-width="1" fill="none"/>
<line x1="581" y1="201.9" x2="674" y2="201.9" stroke="#00d8d8" stroke-width="1.6"/>
<line x1="600" y1="201.9" x2="662" y2="201.9" stroke="#e8e800" stroke-width="1.2"/>
<rect x="662" y="202" width="12.399999999999977" height="27" stroke="#00d8d8" stroke-width="1.5" fill="none"/>
<line x1="582" y1="202" x2="582" y2="260" stroke="#e8e800" stroke-width="1.5"/>
<line x1="602" y1="202" x2="602" y2="229" stroke="#00d8d8" stroke-width="1.2"/>
<line x1="621.2" y1="229" x2="621.2" y2="247" stroke="#00d8d8" stroke-width="1.2"/>
<line x1="540" y1="229.8" x2="674" y2="229.8" stroke="#e00000" stroke-width="1.2"/>
<rect x="540" y="209.8" width="13" height="20.0" stroke="#00d8d8" stroke-width="1.2" fill="none"/>
<line x1="553" y1="217.6" x2="582" y2="217.6" stroke="#00d8d8" stroke-width="1.2"/>
<rect x="543.5" y="243.8" width="48.0" height="15.699999999999989" stroke="#e8e800" stroke-width="1" fill="none"/>
<rect x="621" y="229.8" width="41" height="29.69999999999999" stroke="#e8e800" stroke-width="1.2" fill="none"/>
<rect x="594" y="236.5" width="5.399999999999977" height="3.8000000000000114" stroke="#2030ff" stroke-width="1" fill="none"/>
<line x1="553" y1="229.8" x2="553" y2="260" stroke="#00d8d8" stroke-width="1"/>
<line x1="538" y1="231" x2="538" y2="260" stroke="#e8e800" stroke-width="1"/>
<line x1="560" y1="231" x2="556" y2="244" stroke="#e8e8e8" stroke-width="1"/>
<line x1="627" y1="231" x2="624" y2="243" stroke="#e8e8e8" stroke-width="1"/>
<line x1="648" y1="231" x2="650" y2="260" stroke="#00d8d8" stroke-width="1"/>
<rect x="380.6" y="250" width="53.69999999999999" height="46" stroke="#e8e800" stroke-width="1.2" fill="none"/>
<line x1="382.5" y1="263.9" x2="409.3" y2="263.9" stroke="#00d8d8" stroke-width="1.3"/>
<line x1="410.3" y1="270" x2="410.3" y2="296" stroke="#e8e800" stroke-width="1.3"/>
<line x1="410.3" y1="271" x2="434" y2="271" stroke="#e8e8e8" stroke-width="1.3"/>
<line x1="409.7" y1="250" x2="409.7" y2="270" stroke="#d010e0" stroke-width="1.2"/>
<rect x="388" y="297" width="15.600000000000023" height="2.5" stroke="#10e010" stroke-width="1" fill="none"/>
<rect x="414.5" y="297" width="15.0" height="2.5" stroke="#10e010" stroke-width="1" fill="none"/>
<rect x="388" y="286" width="5.5" height="3" stroke="#2030ff" stroke-width="1" fill="none"/>
<rect x="421" y="260" width="4" height="3" stroke="#2030ff" stroke-width="1" fill="none"/>
<rect x="434.3" y="250" width="48.0" height="54.69999999999999" stroke="#e8e800" stroke-width="1.2" fill="none"/>
<line x1="436" y1="276.5" x2="482" y2="276.5" stroke="#00d8d8" stroke-width="1.3"/>
<line x1="452" y1="276.5" x2="470" y2="276.5" stroke="#e8e8e8" stroke-width="1.3"/>
<line x1="459.8" y1="277" x2="459.8" y2="304" stroke="#d010e0" stroke-width="1.2"/>
<rect x="455.4" y="250" width="14.400000000000034" height="15" stroke="#00d8d8" stroke-width="1.2" fill="none"/>
<rect x="440" y="304.7" width="14.399999999999977" height="4.800000000000011" stroke="#10e010" stroke-width="1" fill="none"/>
<rect x="465" y="304.7" width="12.5" height="4.800000000000011" stroke="#10e010" stroke-width="1" fill="none"/>
<line x1="434" y1="305" x2="482" y2="305" stroke="#a08000" stroke-width="1"/>
<line x1="482.3" y1="251" x2="482.3" y2="351" stroke="#e8e800" stroke-width="1.3"/>
<line x1="513" y1="251" x2="513" y2="318" stroke="#e8e800" stroke-width="1.3"/>
<line x1="530" y1="232" x2="530" y2="320" stroke="#e00000" stroke-width="1.2"/>
<line x1="542.3" y1="251" x2="542.3" y2="351" stroke="#e8e800" stroke-width="1.3"/>
<line x1="482.3" y1="317.6" x2="542.7" y2="317.6" stroke="#00d8d8" stroke-width="1.3"/>
<line x1="482" y1="305" x2="542" y2="305" stroke="#a08000" stroke-width="1"/>
<line x1="513" y1="251" x2="542.7" y2="251" stroke="#e8e800" stroke-width="1.3"/>
<line x1="494.7" y1="230" x2="494.7" y2="351" stroke="#e8e800" stroke-width="0.9"/>
<rect x="543" y="250" width="47" height="54" stroke="#00d8d8" stroke-width="1.2" fill="none"/>
<line x1="543" y1="276.9" x2="590" y2="276.9" stroke="#d010e0" stroke-width="1.2"/>
<line x1="555" y1="276.9" x2="575" y2="276.9" stroke="#e8e8e8" stroke-width="1.2"/>
<line x1="565" y1="277" x2="565" y2="304" stroke="#d010e0" stroke-width="1.2"/>
<rect x="555" y="250" width="15.700000000000045" height="15" stroke="#00d8d8" stroke-width="1.2" fill="none"/>
<rect x="547.7" y="304.7" width="12.299999999999955" height="4.800000000000011" stroke="#10e010" stroke-width="1" fill="none"/>
<rect x="570.7" y="304.7" width="14.299999999999955" height="4.800000000000011" stroke="#10e010" stroke-width="1" fill="none"/>
<line x1="590.9" y1="250" x2="590.9" y2="350" stroke="#e8e800" stroke-width="1.4"/>
<line x1="590" y1="304" x2="622" y2="304" stroke="#e8e800" stroke-width="1"/>
<rect x="590.9" y="305.6" width="31.600000000000023" height="11.399999999999977" stroke="#00d8d8" stroke-width="1.2" fill="none"/>
<rect x="621.6" y="265.4" width="51.799999999999955" height="45.0" stroke="#e8e800" stroke-width="1.2" fill="none"/>
<rect x="633" y="265.4" width="39" height="42.60000000000002" stroke="#00d8d8" stroke-width="1" fill="none"/>
<line x1="655" y1="265.4" x2="655" y2="281" stroke="#00d8d8" stroke-width="1"/>
<line x1="633" y1="280.7" x2="672" y2="280.7" stroke="#00d8d8" stroke-width="1"/>
<line x1="622" y1="275" x2="633" y2="275" stroke="#e8e8e8" stroke-width="1.2"/>
<rect x="622.5" y="250" width="40.299999999999955" height="15.399999999999977" stroke="#00d8d8" stroke-width="1" fill="none"/>
<line x1="635" y1="250" x2="635" y2="265" stroke="#00d8d8" stroke-width="1"/>
<line x1="621" y1="310.4" x2="680" y2="310.4" stroke="#e00000" stroke-width="1.2"/>
<rect x="627.3" y="310.4" width="12.5" height="3.900000000000034" stroke="#10e010" stroke-width="1" fill="none"/>
<rect x="650.3" y="310.4" width="15.400000000000091" height="3.900000000000034" stroke="#10e010" stroke-width="1" fill="none"/>
<line x1="621.6" y1="310" x2="621.6" y2="347.9" stroke="#a09000" stroke-width="1"/>
<line x1="661.3" y1="300" x2="661.3" y2="347.9" stroke="#a09000" stroke-width="1"/>
<line x1="673" y1="229" x2="673" y2="347.9" stroke="#a09000" stroke-width="1"/>
<circle cx="392.7" cy="176.6" r="3.4" stroke="#e8e8e8" stroke-width="1" fill="none"/>
<line x1="389.7" y1="176.6" x2="395.7" y2="176.6" stroke="#e8e8e8" stroke-width="0.8"/>
<path d="M385.1 174.6 l3 1.5 -3 1.5z" stroke="#d010e0" stroke-width="1" fill="#d010e0"/>
<line x1="386.6" y1="177.6" x2="386.6" y2="180.6" stroke="#10e010" stroke-width="1"/>
<circle cx="419.8" cy="173.1" r="3.4" stroke="#e8e8e8" stroke-width="1" fill="none"/>
<line x1="416.8" y1="173.1" x2="422.8" y2="173.1" stroke="#e8e8e8" stroke-width="0.8"/>
<circle cx="473.9" cy="183.6" r="3.4" stroke="#e8e8e8" stroke-width="1" fill="none"/>
<line x1="470.9" y1="183.6" x2="476.9" y2="183.6" stroke="#e8e8e8" stroke-width="0.8"/>
<circle cx="578.8" cy="178.9" r="3.4" stroke="#e8e8e8" stroke-width="1" fill="none"/>
<line x1="575.8" y1="178.9" x2="581.8" y2="178.9" stroke="#e8e8e8" stroke-width="0.8"/>
<circle cx="674.8" cy="188.8" r="3.4" stroke="#e8e8e8" stroke-width="1" fill="none"/>
<line x1="671.8" y1="188.8" x2="677.8" y2="188.8" stroke="#e8e8e8" stroke-width="0.8"/>
<path d="M679.0 186.8 l3 1.5 -3 1.5z" stroke="#d010e0" stroke-width="1" fill="#d010e0"/>
<line x1="680.5" y1="189.8" x2="680.5" y2="192.8" stroke="#10e010" stroke-width="1"/>
<circle cx="682.3" cy="230.7" r="3.4" stroke="#e8e8e8" stroke-width="1" fill="none"/>
<line x1="679.3" y1="230.7" x2="685.3" y2="230.7" stroke="#e8e8e8" stroke-width="0.8"/>
<circle cx="399.7" cy="309.5" r="3.4" stroke="#e8e8e8" stroke-width="1" fill="none"/>
<line x1="396.7" y1="309.5" x2="402.7" y2="309.5" stroke="#e8e8e8" stroke-width="0.8"/>
<path d="M391.5 307.5 l3 1.5 -3 1.5z" stroke="#d010e0" stroke-width="1" fill="#d010e0"/>
<line x1="393" y1="310.5" x2="393" y2="313.5" stroke="#10e010" stroke-width="1"/>
<circle cx="425.7" cy="309.5" r="3.4" stroke="#e8e8e8" stroke-width="1" fill="none"/>
<line x1="422.7" y1="309.5" x2="428.7" y2="309.5" stroke="#e8e8e8" stroke-width="0.8"/>
<path d="M417.5 307.5 l3 1.5 -3 1.5z" stroke="#d010e0" stroke-width="1" fill="#d010e0"/>
<line x1="419" y1="310.5" x2="419" y2="313.5" stroke="#10e010" stroke-width="1"/>
<circle cx="447.7" cy="319.5" r="3.4" stroke="#e8e8e8" stroke-width="1" fill="none"/>
<line x1="444.7" y1="319.5" x2="450.7" y2="319.5" stroke="#e8e8e8" stroke-width="0.8"/>
<path d="M439.5 317.5 l3 1.5 -3 1.5z" stroke="#d010e0" stroke-width="1" fill="#d010e0"/>
<line x1="441" y1="320.5" x2="441" y2="323.5" stroke="#10e010" stroke-width="1"/>
<circle cx="469.8" cy="319.5" r="3.4" stroke="#e8e8e8" stroke-width="1" fill="none"/>
<line x1="466.8" y1="319.5" x2="472.8" y2="319.5" stroke="#e8e8e8" stroke-width="0.8"/>
<path d="M461.5 317.5 l3 1.5 -3 1.5z" stroke="#d010e0" stroke-width="1" fill="#d010e0"/>
<line x1="463" y1="320.5" x2="463" y2="323.5" stroke="#10e010" stroke-width="1"/>
<circle cx="532" cy="324.8" r="3.4" stroke="#e8e8e8" stroke-width="1" fill="none"/>
<line x1="529" y1="324.8" x2="535" y2="324.8" stroke="#e8e8e8" stroke-width="0.8"/>
<circle cx="553" cy="320" r="3.4" stroke="#e8e8e8" stroke-width="1" fill="none"/>
<line x1="550" y1="320" x2="556" y2="320" stroke="#e8e8e8" stroke-width="0.8"/>
<path d="M544.5 318 l3 1.5 -3 1.5z" stroke="#d010e0" stroke-width="1" fill="#d010e0"/>
<line x1="546" y1="321" x2="546" y2="324" stroke="#10e010" stroke-width="1"/>
<circle cx="576" cy="320" r="3.4" stroke="#e8e8e8" stroke-width="1" fill="none"/>
<line x1="573" y1="320" x2="579" y2="320" stroke="#e8e8e8" stroke-width="0.8"/>
<path d="M567.5 318 l3 1.5 -3 1.5z" stroke="#d010e0" stroke-width="1" fill="#d010e0"/>
<line x1="569" y1="321" x2="569" y2="324" stroke="#10e010" stroke-width="1"/>
<circle cx="591.4" cy="326.4" r="3.4" stroke="#e8e8e8" stroke-width="1" fill="none"/>
<line x1="588.4" y1="326.4" x2="594.4" y2="326.4" stroke="#e8e8e8" stroke-width="0.8"/>
<circle cx="633.5" cy="324.5" r="3.4" stroke="#e8e8e8" stroke-width="1" fill="none"/>
<line x1="630.5" y1="324.5" x2="636.5" y2="324.5" stroke="#e8e8e8" stroke-width="0.8"/>
<path d="M638.5 322.5 l3 1.5 -3 1.5z" stroke="#d010e0" stroke-width="1" fill="#d010e0"/>
<line x1="640" y1="325.5" x2="640" y2="328.5" stroke="#10e010" stroke-width="1"/>
<circle cx="661" cy="324.8" r="3.4" stroke="#e8e8e8" stroke-width="1" fill="none"/>
<line x1="658" y1="324.8" x2="664" y2="324.8" stroke="#e8e8e8" stroke-width="0.8"/>
<path d="M653.5 322.8 l3 1.5 -3 1.5z" stroke="#d010e0" stroke-width="1" fill="#d010e0"/>
<line x1="655" y1="325.8" x2="655" y2="328.8" stroke="#10e010" stroke-width="1"/>
<line x1="392.7" y1="180" x2="392.7" y2="190" stroke="#e8e8e8" stroke-width="1"/>
<path d="M416.4 173.1 h-4 v5" stroke="#e8e8e8" stroke-width="0.8" fill="none"/>
<path d="M470.5 183.6 h-4 v3" stroke="#e8e8e8" stroke-width="0.8" fill="none"/>
<path d="M582.2 178.9 h3 v8" stroke="#e8e8e8" stroke-width="0.8" fill="none"/>
<path d="M576 190 v5 h2" stroke="#e8e8e8" stroke-width="1" fill="none"/>
<path d="M678 230.7 h-3 v-5" stroke="#e8e8e8" stroke-width="0.8" fill="none"/>
<text x="396" y="200" fill="#b0b0b0" font-size="3.2" font-family="Liberation Sans" text-anchor="middle" >40</text>
<text x="420" y="202" fill="#b0b0b0" font-size="3.2" font-family="Liberation Sans" text-anchor="middle" >85</text>
<text x="398" y="232" fill="#b0b0b0" font-size="3.2" font-family="Liberation Sans" text-anchor="middle" >79</text>
<text x="420" y="258" fill="#b0b0b0" font-size="3.2" font-family="Liberation Sans" text-anchor="middle" >26</text>
<text x="396" y="280" fill="#b0b0b0" font-size="3.2" font-family="Liberation Sans" text-anchor="middle" >57</text>
<text x="422" y="285" fill="#b0b0b0" font-size="3.2" font-family="Liberation Sans" text-anchor="middle" >87</text>
<text x="450" y="262" fill="#b0b0b0" font-size="3.2" font-family="Liberation Sans" text-anchor="middle" >70</text>
<text x="448" y="292" fill="#b0b0b0" font-size="3.2" font-family="Liberation Sans" text-anchor="middle" >90</text>
<text x="470" y="292" fill="#b0b0b0" font-size="3.2" font-family="Liberation Sans" text-anchor="middle" >84</text>
<text x="505" y="238" fill="#b0b0b0" font-size="3.2" font-family="Liberation Sans" text-anchor="middle" >18</text>
<text x="520" y="238" fill="#b0b0b0" font-size="3.2" font-family="Liberation Sans" text-anchor="middle" >87</text>
<text x="458" y="236" fill="#b0b0b0" font-size="3.2" font-family="Liberation Sans" text-anchor="middle" >11</text>
<text x="505" y="198" fill="#b0b0b0" font-size="3.2" font-family="Liberation Sans" text-anchor="middle" >70</text>
<text x="525" y="198" fill="#b0b0b0" font-size="3.2" font-family="Liberation Sans" text-anchor="middle" >43</text>
<text x="545" y="221" fill="#b0b0b0" font-size="3.2" font-family="Liberation Sans" text-anchor="middle" >80</text>
<text x="566" y="251" fill="#b0b0b0" font-size="3.2" font-family="Liberation Sans" text-anchor="middle" >39</text>
<text x="600" y="212" fill="#b0b0b0" font-size="3.2" font-family="Liberation Sans" text-anchor="middle" >34</text>
<text x="640" y="213" fill="#b0b0b0" font-size="3.2" font-family="Liberation Sans" text-anchor="middle" >70</text>
<text x="612" y="184" fill="#b0b0b0" font-size="3.2" font-family="Liberation Sans" text-anchor="middle" >79</text>
<text x="648" y="186" fill="#b0b0b0" font-size="3.2" font-family="Liberation Sans" text-anchor="middle" >80</text>
<text x="622" y="196" fill="#b0b0b0" font-size="3.2" font-family="Liberation Sans" text-anchor="middle" >70</text>
<text x="607" y="240" fill="#b0b0b0" font-size="3.2" font-family="Liberation Sans" text-anchor="middle" >60</text>
<text x="640" y="244" fill="#b0b0b0" font-size="3.2" font-family="Liberation Sans" text-anchor="middle" >91</text>
<text x="560" y="252" fill="#b0b0b0" font-size="3.2" font-family="Liberation Sans" text-anchor="middle" >29</text>
<text x="555" y="290" fill="#b0b0b0" font-size="3.2" font-family="Liberation Sans" text-anchor="middle" >39</text>
<text x="578" y="290" fill="#b0b0b0" font-size="3.2" font-family="Liberation Sans" text-anchor="middle" >91</text>
<text x="556" y="258" fill="#b0b0b0" font-size="3.2" font-family="Liberation Sans" text-anchor="middle" >29</text>
<text x="605" y="311" fill="#b0b0b0" font-size="3.2" font-family="Liberation Sans" text-anchor="middle" >76</text>
<text x="648" y="288" fill="#b0b0b0" font-size="3.2" font-family="Liberation Sans" text-anchor="middle" >59</text>
<text x="663" y="273" fill="#b0b0b0" font-size="3.2" font-family="Liberation Sans" text-anchor="middle" >11</text>
<text x="497" y="280" fill="#b0b0b0" font-size="3.2" font-family="Liberation Sans" text-anchor="middle" >95</text>
<text x="525" y="280" fill="#b0b0b0" font-size="3.2" font-family="Liberation Sans" text-anchor="middle" >18</text>
<text x="500" y="310" fill="#b0b0b0" font-size="3.2" font-family="Liberation Sans" text-anchor="middle" >30</text>
<text x="525" y="311" fill="#b0b0b0" font-size="3.2" font-family="Liberation Sans" text-anchor="middle" >85</text>
<text x="465" y="257" fill="#b0b0b0" font-size="3.2" font-family="Liberation Sans" text-anchor="middle" >15</text>
<text x="555" y="228" fill="#b0b0b0" font-size="3.2" font-family="Liberation Sans" text-anchor="middle" >48</text>
<text x="666" y="215" fill="#b0b0b0" font-size="3.2" font-family="Liberation Sans" text-anchor="middle" >13</text>
<text x="636" y="303" fill="#b0b0b0" font-size="3.2" font-family="Liberation Sans" text-anchor="middle" >44</text>
<line x1="434" y1="243.5" x2="481" y2="243.5" stroke="#00d8d8" stroke-width="1.2"/>
<line x1="482" y1="259" x2="542" y2="259" stroke="#e8e800" stroke-width="1"/>
<line x1="543" y1="259" x2="590" y2="259" stroke="#00d8d8" stroke-width="1"/>
<line x1="513" y1="230" x2="513" y2="250" stroke="#e8e800" stroke-width="1"/>
<line x1="495" y1="247" x2="511" y2="247" stroke="#e8e800" stroke-width="1"/>
<line x1="540" y1="230" x2="540" y2="250" stroke="#00d8d8" stroke-width="1"/>
<line x1="596" y1="229.8" x2="596" y2="260" stroke="#00d8d8" stroke-width="1"/>
<line x1="621" y1="247" x2="662" y2="247" stroke="#00d8d8" stroke-width="1"/>
<line x1="662" y1="229.8" x2="662" y2="260" stroke="#e8e800" stroke-width="1.2"/>
<line x1="382" y1="229.5" x2="382" y2="296" stroke="#a09000" stroke-width="1"/>
<line x1="384" y1="192" x2="384" y2="217" stroke="#a09000" stroke-width="0.8"/>
<line x1="436" y1="262" x2="455" y2="262" stroke="#00d8d8" stroke-width="1"/>
<line x1="469.8" y1="262" x2="482" y2="262" stroke="#00d8d8" stroke-width="1"/>
<line x1="570.7" y1="262" x2="590" y2="262" stroke="#00d8d8" stroke-width="1"/>
<line x1="543" y1="290" x2="565" y2="290" stroke="#00d8d8" stroke-width="0.8"/>
<line x1="594" y1="229.8" x2="594" y2="243" stroke="#00d8d8" stroke-width="1"/>
<line x1="594" y1="243" x2="621" y2="243" stroke="#00d8d8" stroke-width="1"/>
<line x1="662" y1="229.5" x2="680" y2="229.5" stroke="#e8e8e8" stroke-width="1"/>
<line x1="674.4" y1="202" x2="674.4" y2="232" stroke="#00d8d8" stroke-width="1.5"/>
<rect x="645" y="265.4" width="17" height="9.600000000000023" stroke="#00d8d8" stroke-width="0.8" fill="none"/>
<text x="465.8" y="369.8" fill="#d8c838" font-size="11.5" font-family="Liberation Serif" text-anchor="start" textLength="118" lengthAdjust="spacingAndGlyphs" font-weight="300">标准层3~31层尺寸平面图</text>
<line x1="462.5" y1="378.9" x2="611.3" y2="378.9" stroke="#d00000" stroke-width="1.6"/>
<path d="M338 388 h25 v6 h-18 v26 h18 v6 h-25 z" stroke="#d010e0" stroke-width="1" fill="#880a98"/>
<line x1="325" y1="408.6" x2="338" y2="408.6" stroke="#d010e0" stroke-width="1.6"/>
<line x1="342" y1="383" x2="362" y2="383" stroke="#e8e8e8" stroke-width="0.6"/>
<line x1="342" y1="381" x2="342" y2="386" stroke="#e8e8e8" stroke-width="0.6"/>
<line x1="365.5" y1="388" x2="365.5" y2="426" stroke="#e8e8e8" stroke-width="0.6"/>
<line x1="325" y1="407.5" x2="380" y2="407.5" stroke="#a05000" stroke-width="0.6"/>
<line x1="368" y1="407" x2="382" y2="407" stroke="#e8e8e8" stroke-width="0.6"/>
<text x="370" y="406" fill="#c0c0c0" font-size="3" font-family="Liberation Serif" text-anchor="start" >450</text>
<line x1="363" y1="408.5" x2="376" y2="408.5" stroke="#804000" stroke-width="0.6"/>
<circle cx="348.9" cy="437" r="5" stroke="#e8e8e8" stroke-width="1.4" fill="none"/>
<line x1="347" y1="437" x2="351" y2="437" stroke="#e8e8e8" stroke-width="0.6"/>
<text x="349.5" y="449" fill="#e0e0e0" font-size="5" font-family="Liberation Sans" text-anchor="middle" textLength="20" lengthAdjust="spacingAndGlyphs">墙柱详大样</text>
<line x1="339" y1="451.9" x2="360" y2="451.9" stroke="#10e010" stroke-width="1"/>
<path d="M412.8 391 h8.2 v15 h16.6 v7.4 h-16.6 v9.3 h-8.2 z" stroke="#d010e0" stroke-width="1" fill="#880a98"/>
<line x1="408" y1="389" x2="426" y2="389" stroke="#e8e8e8" stroke-width="0.6"/>
<line x1="410" y1="386" x2="410" y2="398" stroke="#e8e8e8" stroke-width="0.6"/>
<line x1="421" y1="404" x2="437" y2="404" stroke="#e8e8e8" stroke-width="0.6"/>
<line x1="405" y1="407" x2="412" y2="407" stroke="#806000" stroke-width="0.6"/>
<circle cx="416.8" cy="432.1" r="5.3" stroke="#e8e8e8" stroke-width="1.4" fill="none"/>
<text x="418.5" y="444" fill="#e0e0e0" font-size="5" font-family="Liberation Sans" text-anchor="middle" textLength="28" lengthAdjust="spacingAndGlyphs">剪力墙边大样二</text>
<line x1="404" y1="446.5" x2="433" y2="446.5" stroke="#10e010" stroke-width="1"/>
<path d="M480.8 404.4 h8.2 v18.3 h-8.2 v-10 h-18.3 v-6.7 h18.3 z" stroke="#d010e0" stroke-width="1" fill="#880a98"/>
<line x1="482" y1="401" x2="490" y2="401" stroke="#e8e8e8" stroke-width="0.6"/>
<line x1="489" y1="407" x2="505" y2="407" stroke="#e8e8e8" stroke-width="0.6"/>
<circle cx="484.7" cy="434.3" r="2.3" stroke="#10e010" stroke-width="1" fill="none"/>
<circle cx="477.4" cy="443.2" r="4.5" stroke="#e8e8e8" stroke-width="1.4" fill="none"/>
<text x="498" y="445.5" fill="#e0e0e0" font-size="5" font-family="Liberation Sans" text-anchor="middle" textLength="27" lengthAdjust="spacingAndGlyphs">墙连接边大样一</text>
<line x1="484" y1="448.5" x2="512" y2="448.5" stroke="#10e010" stroke-width="1"/>
<path d="M549.4 396 h7.6 v23.4 h-7.6 v-7.4 h-17.4 v-7.6 h17.4 z" stroke="#d010e0" stroke-width="1" fill="#880a98"/>
<line x1="536" y1="401" x2="548" y2="401" stroke="#e8e8e8" stroke-width="0.6"/>
<line x1="547" y1="427.8" x2="557" y2="427.8" stroke="#d010e0" stroke-width="1.2"/>
<line x1="553" y1="420" x2="553" y2="427" stroke="#806000" stroke-width="0.6"/>
<line x1="530" y1="406" x2="532" y2="414" stroke="#e00000" stroke-width="0.6"/>
<path d="M621.3 397 h8.2 v22.4 h-8.2 v-7.4 h-34.9 v-6 h34.9 z" stroke="#d010e0" stroke-width="1" fill="#880a98"/>
<line x1="587" y1="400" x2="620" y2="400" stroke="#e8e8e8" stroke-width="0.6"/>
<line x1="586" y1="402" x2="586" y2="412" stroke="#e00000" stroke-width="0.6"/>
<line x1="619.6" y1="428" x2="628" y2="428" stroke="#d010e0" stroke-width="1.2"/>
<line x1="625" y1="420" x2="625" y2="427" stroke="#806000" stroke-width="0.6"/>
<circle cx="860.3" cy="348.7" r="3.1" stroke="#10e010" stroke-width="0.9" fill="none"/>
<circle cx="917.5" cy="348.7" r="3.1" stroke="#10e010" stroke-width="0.9" fill="none"/>
<line x1="855" y1="355.5" x2="923" y2="355.5" stroke="#10e010" stroke-width="0.9"/>
<line x1="860.3" y1="357" x2="860.3" y2="387" stroke="#d010e0" stroke-width="1.6"/>
<line x1="917.6" y1="357" x2="917.6" y2="387" stroke="#d010e0" stroke-width="1.8"/>
<line x1="861" y1="359.9" x2="872" y2="359.9" stroke="#d010e0" stroke-width="1.4"/>
<line x1="907" y1="359.9" x2="917" y2="359.9" stroke="#d010e0" stroke-width="1.4"/>
<line x1="861" y1="382.5" x2="872" y2="382.5" stroke="#d010e0" stroke-width="1.4"/>
<line x1="907" y1="382.5" x2="917" y2="382.5" stroke="#d010e0" stroke-width="1.4"/>
<line x1="861" y1="359.6" x2="872" y2="359.6" stroke="#ff9000" stroke-width="0.5"/>
<line x1="872" y1="359.5" x2="907" y2="359.5" stroke="#00d8d8" stroke-width="1.1"/>
<line x1="875" y1="362.5" x2="905" y2="362.5" stroke="#00a0a0" stroke-width="0.8"/>
<line x1="872" y1="385.4" x2="907" y2="385.4" stroke="#00d8d8" stroke-width="1.1"/>
<line x1="875" y1="382.4" x2="905" y2="382.4" stroke="#00a0a0" stroke-width="0.8"/>
<line x1="871.4" y1="360.5" x2="907.4" y2="384.7" stroke="#d010e0" stroke-width="1.5"/>
<line x1="867.5" y1="382.8" x2="906.8" y2="361.2" stroke="#d8d8d8" stroke-width="0.7"/>
<rect x="880" y="366" width="2" height="2" stroke="#10e010" stroke-width="0.8" fill="none"/>
<rect x="895" y="366" width="2" height="2" stroke="#10e010" stroke-width="0.8" fill="none"/>
<rect x="880" y="375.5" width="2" height="2.0" stroke="#10e010" stroke-width="0.8" fill="none"/>
<rect x="895" y="376" width="2" height="2" stroke="#10e010" stroke-width="0.8" fill="none"/>
<line x1="888" y1="368" x2="889" y2="372" stroke="#e8e8e8" stroke-width="0.8"/>
<line x1="848" y1="359.5" x2="853" y2="359.5" stroke="#10e010" stroke-width="0.8"/>
<line x1="848" y1="382.5" x2="853" y2="382.5" stroke="#10e010" stroke-width="0.8"/>
<line x1="855" y1="367" x2="855" y2="377" stroke="#a0a0a0" stroke-width="0.5"/>
<text x="866" y="392" fill="#a0a0a0" font-size="2.5" font-family="Liberation Sans" text-anchor="middle" >100</text>
<text x="890" y="392" fill="#a0a0a0" font-size="2.5" font-family="Liberation Sans" text-anchor="middle" >1800</text>
<text x="912" y="392" fill="#a0a0a0" font-size="2.5" font-family="Liberation Sans" text-anchor="middle" >100</text>
<text x="888" y="400.5" fill="#c8c8c8" font-size="3.6" font-family="Liberation Sans" text-anchor="middle" textLength="16" lengthAdjust="spacingAndGlyphs">1-1剖面图</text>
<line x1="867" y1="403.3" x2="911" y2="403.3" stroke="#e8e8e8" stroke-width="0.9"/>
<line x1="888" y1="355" x2="888" y2="357" stroke="#ff9000" stroke-width="1"/></svg><svg class="a" style="left:-167px;top:-86px" width="1056" height="573">
<line x1="197.5" y1="484" x2="197.5" y2="508.5" stroke="#1fd0a8" stroke-width="1"/>
<line x1="197.5" y1="509" x2="223" y2="509" stroke="#c00000" stroke-width="2"/>
<path d="M194.8 473.8l2.7 3 2.7-3 M197.5 476.8v3" stroke="#8a8a8a" stroke-width="0.9" fill="none"/>
<path d="M194.8 506.5h5l-5 5h5" stroke="#8a8a8a" stroke-width="0.9" fill="none"/>
<path d="M227.3 506.3l5 5 M232.3 506.3l-5 5" stroke="#8a8a8a" stroke-width="0.9" fill="none"/>
<rect x="994.5" y="120.5" width="28" height="28" fill="#e6e6e6" stroke="#f8f8f8" stroke-width="1"/>
<path d="M1007.5 129v10 M1008 133.5h4 M1003 139.5h11" stroke="#8c8c8c" stroke-width="0.9" fill="none"/>
</svg></div>
<div id="cmdarea" class="a"></div>
<div id="ptabs" class="a">
<div class="t" style="left:3px;top:2px;color:#555;-webkit-text-stroke:0">视图浏览器</div>
<div class="a" style="left:40px;top:0;width:20px;height:13px;background:#fbfbfb"></div>
<div class="t" style="left:44px;top:2px;color:#1a3a7a">属性</div>
</div>
<div class="a" style="left:166px;top:541px;width:714px;height:16px;background:#fdfdfd;border-radius:3px"></div>
<svg class="a" style="left:166px;top:541px" width="714" height="16">
<path d="M2.5 4v1 M2.5 6v1 M2.5 8v1 M2.5 10v1" stroke="#777" stroke-width="1"/>
<rect x="9" y="7.5" width="1" height="1" fill="#46c"/>
<path d="M338.5 2v12" stroke="#e0e0e0"/>
<path d="M344 9l3-3 3 3" stroke="#444" fill="none"/>
<path d="M358.5 3v1 M358.5 5v1 M358.5 7v1 M358.5 9v1 M358.5 11v1" stroke="#888"/>
<path d="M365.5 3.5h4l2 2v6h-6z" fill="none" stroke="#bbb"/><path d="M367 12h4" stroke="#c22"/>
<path d="M379.5 3.5h4l2 2v6h-6z" fill="none" stroke="#bbb"/><path d="M382 7v4" stroke="#58a"/>
<path d="M390.5 2v12" stroke="#e0e0e0"/>
<g fill="none" stroke="#333" stroke-width="1">
<path d="M397.5 5.5l2-2h6v6l-2 2h-6z" /><path d="M397.5 5.5l2-2h6l-2 2z" fill="#7cc8b8"/><path d="M397.5 5.5h6v6 M403.5 5.5l2-2"/>
<path d="M411.5 5.5l2-2h6v6l-2 2h-6z M411.5 5.5h6v6 M417.5 5.5l2-2"/>
<path d="M425.5 5.5l2-2h6v6l-2 2h-6z"/><path d="M431.5 5.5l2-2v6l-2 2z" fill="#7cc8b8"/><path d="M425.5 5.5h6v6"/>
<path d="M439.5 5.5l2-2h6v6l-2 2h-6z"/><path d="M439.5 5.5h6v6h-6z" fill="#a8dcd0"/>
<path d="M454.5 5.5l2-2h6v6l-2 2h-6z M456.5 3.5v6h6 M454.5 11.5l2-2"/>
<path d="M468.5 5.5l2-2h6v6l-2 2h-6z"/><path d="M468.5 5.5h6v6h-6z" fill="#5aa898"/><path d="M474.5 5.5l2-2"/>
</g>
<path d="M483.5 2v12" stroke="#e0e0e0"/>
<path d="M487.5 7.5h5v4h-5z M489.5 7.5v-3h4v5" fill="none" stroke="#444"/>
<path d="M502.5 3v1 M502.5 5v1 M502.5 7v1 M502.5 9v1 M502.5 11v1" stroke="#888"/>
<path d="M714 0v16" stroke="#e4e4e4" stroke-width="3"/>
</svg>
<div class="t" style="left:703px;top:543.5px;color:#333">当前大样图版本：pkpm_hnym</div>
<div class="t" style="left:807px;top:543.5px;color:#333">翻楼部位：无</div>
<div class="a" style="left:881px;top:540px;width:109px;height:17px;background:#fdfdfd;border-radius:3px"></div>
<svg class="a" style="left:881px;top:540px" width="109" height="17">
<path d="M2.5 5v1 M2.5 7v1 M2.5 9v1 M2.5 11v1" stroke="#888"/>
<rect x="6.5" y="2.5" width="52" height="12" fill="#fff" stroke="#d8d8d8"/>
<path d="M53 8.5h3l-1.5 1.5z" fill="#666"/>
<path d="M77.5 6.5h3v6h-3z M80.5 4.5h3v8h-3z M75 12.5h11" fill="none" stroke="#333"/>
<path d="M91.5 4v9" stroke="#ddd"/>
</svg>
<div class="t" style="left:890px;top:544.5px;color:#333">中梯度</div>
<div class="t" style="left:946px;top:543.5px;color:#222;font-size:9px;line-height:10px">A</div>
<div class="t" style="left:977px;top:544.5px;color:#333">热</div>
<div id="bottom" class="a">
<svg class="a" style="left:0;top:0" width="1056" height="16" fill="none" stroke="#333" stroke-width="1">
<path d="M4.5 5.5h8v8h-8z M4.5 5.5l1-1.5h3"/>
<path d="M18.5 4.5v9 M26.5 4.5v9 M20 6l5 6 M25 6l-5 6"/>
<path d="M33.5 4.5v9h4 M33.5 4.5h8 M33.5 8.5h6 M39 12.5h3 M40.5 11v3"/>
<path d="M46.5 4v10" stroke="#ccc"/>
<path d="M51.5 4.5h2 M58.5 4.5h2 M51.5 13.5h2 M58.5 13.5h2 M51.5 4.5v2 M51.5 11.5v2 M60.5 4.5v2 M60.5 11.5v2 M56 6v6 M53 9h6"/>
<path d="M67 12l-1.5-3 1.5-1v-3h1.5v3 M68.5 5v-1h1.5v4 M70 5h1.5v3 M71.5 6h1.5v4l-1.5 3.5h-4z"/>
<circle cx="85" cy="9" r="3.5"/><path d="M81 9h8 M85 5v8"/>
<circle cx="98" cy="8" r="3"/><path d="M100.5 10.5l3 3"/>
<path d="M107.5 4v10" stroke="#ccc"/>
<path d="M112.5 6.5l2-2h6v7l-2 2h-6z M112.5 6.5h6v7 M118.5 6.5l2-2"/>
<path d="M126.5 6.5l2-2h6v7l-2 2h-6z M126.5 6.5h6v7 M128.5 4.5v7h6"/>
<path d="M141.5 6.5l2-2h6v7l-2 2h-6z" fill="#999"/><path d="M141.5 6.5h6v7 M147.5 6.5l2-2" stroke="#ddd"/>
<rect x="154.5" y="4.5" width="10" height="10" stroke="#3a9a88" fill="#cfe8e2"/>
<path d="M156.5 7.5l2-2h5v7l-2 2h-5z" fill="#888"/><path d="M156.5 7.5h5v7" stroke="#ddd"/>
<path d="M169.5 6.5l2-2h6v7l-2 2h-6z" fill="#b5b5b5" stroke="#aaa"/>
<path d="M186 9l2.5-2.5 2.5 2.5 M186 11.5l2.5-2.5 2.5 2.5" stroke="#444"/>
<path d="M197.5 4v10" stroke="#ccc"/>
<path d="M204 8.5h5" stroke="#777"/>
<path d="M213 8.5h34" stroke="#dcdcdc"/>
<rect x="230.5" y="4.5" width="3" height="8" fill="#f4f4f4" stroke="#999"/>
<path d="M252 8.5h5 M254.5 6v5" stroke="#777"/>
<rect x="949.5" y="3.5" width="11" height="11" fill="#a9d8cc" stroke="#3a9a88"/>
<path d="M951.5 6.5h7v7h-7z M951.5 6.5v-2" stroke="#333"/>
<path d="M962 8h5l-2.5 3z" fill="#333" stroke="none"/>
<rect x="969.5" y="3.5" width="11" height="11" fill="#a9d8cc" stroke="#7bbfb0"/>
<path d="M971 13.5h8 M971 13l8-8" stroke="#333"/>
<rect x="983.5" y="3.5" width="11" height="11" fill="#a9d8cc" stroke="#7bbfb0"/>
<path d="M985.5 4v9.5h8 M985.5 6l6 7" stroke="#333"/>
<path d="M1000.5 5v8.5h8" stroke="#333"/>
<path d="M1013.5 4.5h9v9h-9z M1016.5 4.5v9 M1019.5 4.5v9 M1013.5 7.5h9 M1013.5 10.5h9"/>
<path d="M1031.5 5l-4 4 4 4 4-4z M1027 9h9"/>
<circle cx="1046.5" cy="9" r="3.5" stroke-dasharray="2 1"/><circle cx="1046.5" cy="9" r="1.5"/>
</svg>
</div>

<div class="t" style="left:504px;top:560.5px;color:#333;letter-spacing:0;-webkit-text-stroke:0">283640.14 , 87404.25 , 0.00</div>

</body></html>
